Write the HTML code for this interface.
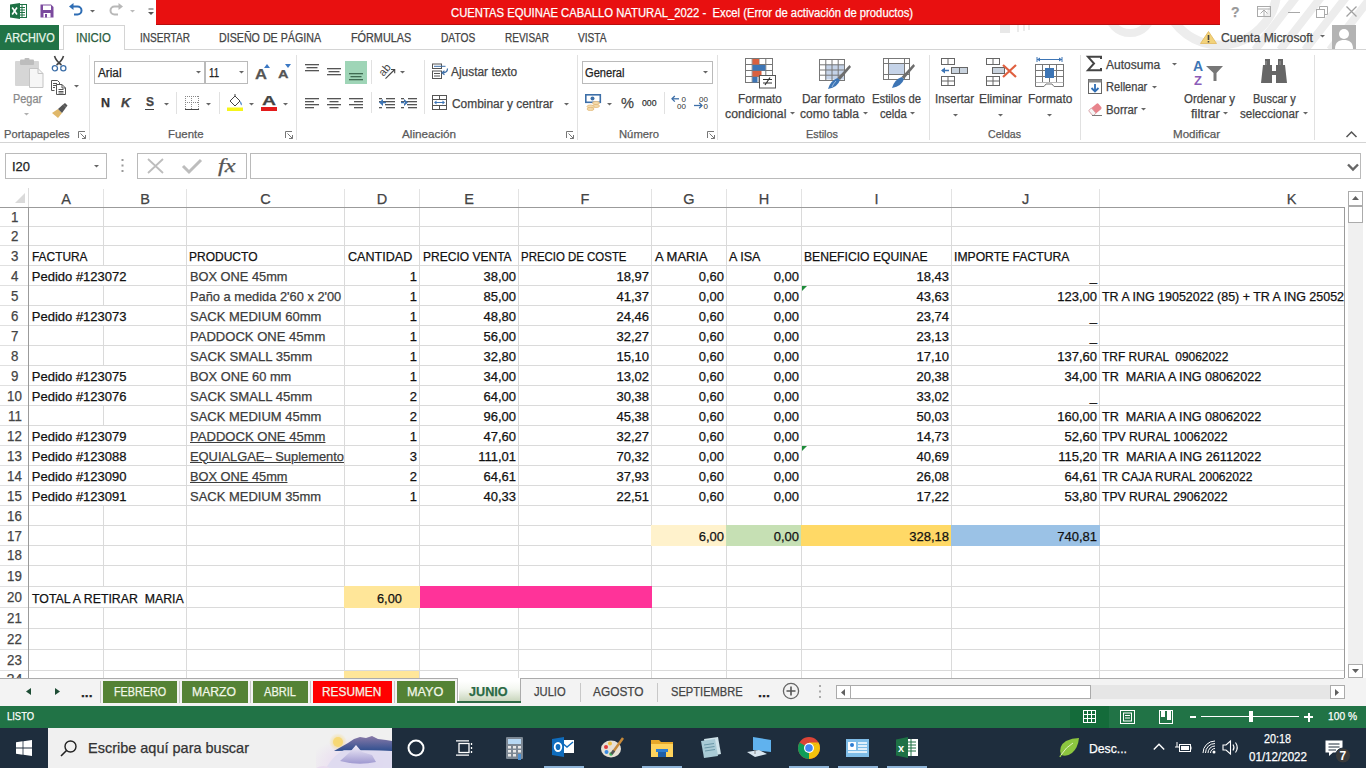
<!DOCTYPE html>
<html><head><meta charset="utf-8"><style>
html,body{margin:0;padding:0;width:1366px;height:768px;overflow:hidden;background:#fff;}
body{position:relative;font-family:"Liberation Sans",sans-serif;}
.t{position:absolute;white-space:pre;-webkit-text-stroke:0.25px currentColor;}
.r{position:absolute;}
.s{position:absolute;overflow:visible;}
</style></head><body>
<svg class="s" style="left:1000px;top:0px;overflow:hidden;" width="366" height="49" viewBox="0 0 366 49"><g transform="translate(-1000,0)" fill="none" stroke="#ededed">
<circle cx="1130" cy="11" r="22" stroke-width="8"/>
<circle cx="1220" cy="-12" r="57" stroke-width="9"/>
<path d="M1255 50L1297 -4M1280 50L1322 -4M1305 50L1347 -4M1330 50L1372 -4" stroke-width="8"/>
<path d="M1003.5 25V33" stroke-width="13" stroke="#e8e8e8"/><path d="M1018 25V32M1024 25V31M1029 25V30" stroke-width="2" stroke="#ebebeb"/><path d="M978 25L987 30" stroke-width="3" stroke="#ededed"/>
</g></svg>
<div class="r" style="left:156px;top:0px;width:1064px;height:25px;background:#e81010;"></div>
<div class="r" style="left:156px;top:24px;width:1064px;height:1px;background:#b80d0d;"></div>
<div class="t" style="left:450.50px;top:6.94px;font-size:12px;line-height:12px;color:#fff;transform:scaleX(0.9397);transform-origin:0 0;">CUENTAS EQUINAE CABALLO NATURAL_2022 -  Excel (Error de activación de productos)</div>
<svg class="s" style="left:10px;top:3px;" width="17" height="16" viewBox="0 0 17 16"><rect x="7" y="1.5" width="9.5" height="13" fill="#fff" stroke="#1e7145" stroke-width="1"/>
<path d="M9 4.5h6M9 7h6M9 9.5h6M9 12h6M12 2V14" stroke="#1e7145" stroke-width="1"/>
<path d="M0 1.5L10 0V16L0 14.5Z" fill="#1e7145"/>
<path d="M2.2 4.5L7 11.5M7 4.5L2.2 11.5" stroke="#fff" stroke-width="1.6"/></svg>
<svg class="s" style="left:40px;top:4px;" width="14" height="14" viewBox="0 0 14 14"><path d="M0.5 0.5H11L13.5 3V13.5H0.5Z" fill="#7b4a9e"/><rect x="3" y="1.5" width="8" height="4.5" fill="#fff"/><rect x="3.5" y="9" width="7" height="4.5" fill="#fff"/><rect x="5" y="10" width="2" height="3.5" fill="#7b4a9e"/></svg>
<svg class="s" style="left:69px;top:3px;" width="14" height="14" viewBox="0 0 14 14"><path d="M3 3.5H8.5A4 4 0 0 1 8.5 11.5H5" fill="none" stroke="#2e6db4" stroke-width="2"/><path d="M0 3.5L4.5 0V7Z" fill="#2e6db4"/></svg>
<svg class="s" style="left:89.5px;top:9.5px;" width="5" height="3" viewBox="0 0 5 3"><path d="M0 0H5L2.5 2.5Z" fill="#666"/></svg>
<svg class="s" style="left:109px;top:3px;" width="14" height="14" viewBox="0 0 14 14"><path d="M11 3.5H5.5A4 4 0 0 0 5.5 11.5H9" fill="none" stroke="#b8b8b8" stroke-width="2"/><path d="M14 3.5L9.5 0V7Z" fill="#b8b8b8"/></svg>
<svg class="s" style="left:130px;top:9.5px;" width="5" height="3" viewBox="0 0 5 3"><path d="M0 0H5L2.5 2.5Z" fill="#bbb"/></svg>
<svg class="s" style="left:147px;top:8px;" width="8" height="8" viewBox="0 0 8 8"><path d="M1.5 1h5" stroke="#555" stroke-width="1"/><path d="M1 4H7L4 7Z" fill="#555"/></svg>
<div class="t" style="left:1231.00px;top:4.65px;font-size:14px;line-height:14px;color:#9a9a9a;font-weight:bold;transform-origin:0 0;">?</div>
<svg class="s" style="left:1257px;top:6px;" width="14" height="11" viewBox="0 0 14 11"><rect x="0.5" y="0.5" width="13" height="10" fill="none" stroke="#aaa"/><path d="M3.5 7.5L7 4L10.5 7.5M7 4V10" stroke="#aaa" fill="none"/><path d="M0.5 3h13" stroke="#aaa"/></svg>
<div class="r" style="left:1288px;top:12px;width:12px;height:1px;background:#a8a8a8;"></div>
<svg class="s" style="left:1316px;top:6px;" width="12" height="12" viewBox="0 0 12 12"><rect x="0.5" y="3.5" width="8" height="8" fill="#fff" stroke="#aaa"/><path d="M3.5 3.5V0.5H11.5V8.5H8.5" fill="none" stroke="#aaa"/></svg>
<svg class="s" style="left:1346px;top:6px;" width="11" height="11" viewBox="0 0 11 11"><path d="M0.5 0.5L10.5 10.5M10.5 0.5L0.5 10.5" stroke="#a0a0a0" stroke-width="1.3"/></svg>
<div class="r" style="left:0px;top:49px;width:63px;height:1px;background:#d4d4d4;"></div>
<div class="r" style="left:0px;top:25px;width:59px;height:25px;background:#217346;"></div>
<div class="t" style="left:4.60px;top:31.54px;font-size:12px;line-height:12px;color:#e8f7ea;transform:scaleX(0.9072);transform-origin:0 0;">ARCHIVO</div>
<div class="r" style="left:63px;top:25px;width:62px;height:25px;background:#fff;border:1px solid #d4d4d4;border-bottom:none;box-sizing:border-box;"></div>
<div class="r" style="left:124px;top:49px;width:1242px;height:1px;background:#d4d4d4;"></div>
<div class="t" style="left:76.00px;top:31.54px;font-size:12px;line-height:12px;color:#2a5c3e;transform:scaleX(0.9491);transform-origin:0 0;">INICIO</div>
<div class="t" style="left:140.00px;top:31.84px;font-size:12px;line-height:12px;color:#444;transform:scaleX(0.8394);transform-origin:0 0;">INSERTAR</div>
<div class="t" style="left:219.40px;top:31.84px;font-size:12px;line-height:12px;color:#444;transform:scaleX(0.8893);transform-origin:0 0;">DISEÑO DE PÁGINA</div>
<div class="t" style="left:351.30px;top:31.84px;font-size:12px;line-height:12px;color:#444;transform:scaleX(0.9029);transform-origin:0 0;">FÓRMULAS</div>
<div class="t" style="left:441.40px;top:31.84px;font-size:12px;line-height:12px;color:#444;transform:scaleX(0.8501);transform-origin:0 0;">DATOS</div>
<div class="t" style="left:505.00px;top:31.84px;font-size:12px;line-height:12px;color:#444;transform:scaleX(0.8352);transform-origin:0 0;">REVISAR</div>
<div class="t" style="left:577.80px;top:31.84px;font-size:12px;line-height:12px;color:#444;transform:scaleX(0.8465);transform-origin:0 0;">VISTA</div>
<svg class="s" style="left:1200px;top:31px;" width="17" height="13" viewBox="0 0 17 13"><path d="M8.5 0.5L16.5 12.5H0.5Z" fill="#f2d27a" stroke="#e2b85a" stroke-width="0.8"/><rect x="7.7" y="4" width="1.6" height="5" fill="#444"/><rect x="7.7" y="10" width="1.6" height="1.5" fill="#444"/></svg>
<div class="t" style="left:1221.00px;top:31.84px;font-size:12px;line-height:12px;color:#444;transform:scaleX(1.0143);transform-origin:0 0;">Cuenta Microsoft</div>
<svg class="s" style="left:1320px;top:35px;" width="5" height="3" viewBox="0 0 5 3"><path d="M0 0H5L2.5 2.5Z" fill="#666"/></svg>
<svg class="s" style="left:1332px;top:25px;" width="24" height="24" viewBox="0 0 24 24"><rect width="24" height="24" fill="#b3b3b3"/><circle cx="12" cy="9" r="5" fill="#fff"/><path d="M3 24C3 17 7 15 12 15S21 17 21 24Z" fill="#fff"/></svg>
<div class="r" style="left:0px;top:142px;width:1366px;height:1px;background:#d4d4d4;"></div>
<div class="r" style="left:89px;top:55px;width:1px;height:85px;background:#e1e1e1;"></div>
<div class="r" style="left:296px;top:55px;width:1px;height:85px;background:#e1e1e1;"></div>
<div class="r" style="left:577px;top:55px;width:1px;height:85px;background:#e1e1e1;"></div>
<div class="r" style="left:717px;top:55px;width:1px;height:85px;background:#e1e1e1;"></div>
<div class="r" style="left:929px;top:55px;width:1px;height:85px;background:#e1e1e1;"></div>
<div class="r" style="left:1080px;top:55px;width:1px;height:85px;background:#e1e1e1;"></div>
<div class="r" style="left:1314px;top:55px;width:1px;height:85px;background:#e1e1e1;"></div>
<div class="t" style="left:3.80px;top:129.19px;font-size:11px;line-height:11px;color:#5a5a5a;transform:scaleX(1.0135);transform-origin:0 0;">Portapapeles</div>
<div class="t" style="left:167.50px;top:129.19px;font-size:11px;line-height:11px;color:#5a5a5a;transform:scaleX(1.0366);transform-origin:0 0;">Fuente</div>
<div class="t" style="left:402.00px;top:129.19px;font-size:11px;line-height:11px;color:#5a5a5a;transform:scaleX(1.0639);transform-origin:0 0;">Alineación</div>
<div class="t" style="left:619.00px;top:129.19px;font-size:11px;line-height:11px;color:#5a5a5a;transform:scaleX(1.0224);transform-origin:0 0;">Número</div>
<div class="t" style="left:806.00px;top:129.19px;font-size:11px;line-height:11px;color:#5a5a5a;transform:scaleX(0.9877);transform-origin:0 0;">Estilos</div>
<div class="t" style="left:988.00px;top:129.19px;font-size:11px;line-height:11px;color:#5a5a5a;transform:scaleX(0.9637);transform-origin:0 0;">Celdas</div>
<div class="t" style="left:1173.00px;top:129.19px;font-size:11px;line-height:11px;color:#5a5a5a;transform:scaleX(1.0532);transform-origin:0 0;">Modificar</div>
<svg class="s" style="left:78px;top:131px;" width="8" height="8" viewBox="0 0 8 8"><path d="M0.5 7V0.5H7" fill="none" stroke="#777"/><path d="M2.5 2.5L7.5 7.5M7.5 4V7.5H4" fill="none" stroke="#777"/></svg>
<svg class="s" style="left:285px;top:131px;" width="8" height="8" viewBox="0 0 8 8"><path d="M0.5 7V0.5H7" fill="none" stroke="#777"/><path d="M2.5 2.5L7.5 7.5M7.5 4V7.5H4" fill="none" stroke="#777"/></svg>
<svg class="s" style="left:566px;top:131px;" width="8" height="8" viewBox="0 0 8 8"><path d="M0.5 7V0.5H7" fill="none" stroke="#777"/><path d="M2.5 2.5L7.5 7.5M7.5 4V7.5H4" fill="none" stroke="#777"/></svg>
<svg class="s" style="left:707px;top:131px;" width="8" height="8" viewBox="0 0 8 8"><path d="M0.5 7V0.5H7" fill="none" stroke="#777"/><path d="M2.5 2.5L7.5 7.5M7.5 4V7.5H4" fill="none" stroke="#777"/></svg>
<svg class="s" style="left:1346px;top:131px;" width="11" height="7" viewBox="0 0 11 7"><path d="M0.5 6L5.5 1L10.5 6" fill="none" stroke="#555" stroke-width="1.5"/></svg>
<svg class="s" style="left:15px;top:58px;" width="29" height="31" viewBox="0 0 29 31"><rect x="0" y="3" width="24" height="25" rx="1" fill="#d6d6d6"/><rect x="5" y="1.5" width="14" height="5.5" rx="1" fill="#bdbdbd"/><rect x="9.5" y="0" width="5" height="3.5" rx="1" fill="#bdbdbd"/>
<path d="M14.5 10.5H23L28 15.5V29.5H14.5Z" fill="#f6f6f6" stroke="#c4c4c4"/><path d="M23 10.5V15.5H28" fill="none" stroke="#c4c4c4"/></svg>
<div class="t" style="left:12.80px;top:92.64px;font-size:12px;line-height:12px;color:#8a8a8a;transform:scaleX(0.9087);transform-origin:0 0;">Pegar</div>
<svg class="s" style="left:24px;top:112.5px;" width="5" height="3" viewBox="0 0 5 3"><path d="M0 0H5L2.5 2.5Z" fill="#b0b0b0"/></svg>
<svg class="s" style="left:52px;top:56px;" width="15" height="16" viewBox="0 0 15 16"><path d="M2.5 0Q4 5 9.5 9M11.5 0Q10 5 4.5 9" fill="none" stroke="#444" stroke-width="1.6"/><circle cx="2.9" cy="12.3" r="2.6" fill="none" stroke="#3d6fa8" stroke-width="1.3"/><circle cx="11.3" cy="12.3" r="2.6" fill="none" stroke="#3d6fa8" stroke-width="1.3"/></svg>
<svg class="s" style="left:51px;top:80px;" width="15" height="15" viewBox="0 0 15 15"><path d="M0.5 0.5H6.5L8.5 2.5V4.5M3.5 10.5H0.5V0.5" fill="#fff" stroke="#555"/><path d="M2 3.5H6M2 5.5H5M2 7.5H4" stroke="#555"/><path d="M5.5 4.5H11L14.5 8V14.5H5.5Z" fill="#fff" stroke="#555"/><path d="M11 4.5V8H14.5" fill="none" stroke="#555"/><path d="M7.5 9.5H12.5M7.5 11.5H12.5M7.5 13H12.5" stroke="#555"/></svg>
<svg class="s" style="left:73.5px;top:85px;" width="5" height="3" viewBox="0 0 5 3"><path d="M0 0H5L2.5 2.5Z" fill="#666"/></svg>
<svg class="s" style="left:52px;top:103px;" width="16" height="15" viewBox="0 0 16 15"><path d="M0 10L6 6L10 10L6 15Z" fill="#e0b86a"/><path d="M6 6L11 1.5L14 4.5L10 10Z" fill="#555"/><path d="M11 1.5L13 0L15.5 2.5L14 4.5Z" fill="#555"/></svg>
<div class="r" style="left:94px;top:61px;width:111px;height:23px;background:#fff;border:1px solid #bababa;box-sizing:border-box;"></div>
<div class="r" style="left:205px;top:61px;width:43px;height:23px;background:#fff;border:1px solid #bababa;box-sizing:border-box;"></div>
<div class="t" style="left:97.50px;top:66.84px;font-size:12px;line-height:12px;color:#222;transform:scaleX(0.9789);transform-origin:0 0;">Arial</div>
<div class="t" style="left:209.00px;top:66.84px;font-size:12px;line-height:12px;color:#222;transform:scaleX(0.8027);transform-origin:0 0;">11</div>
<svg class="s" style="left:195.5px;top:70.5px;" width="5" height="3" viewBox="0 0 5 3"><path d="M0 0H5L2.5 2.5Z" fill="#666"/></svg>
<svg class="s" style="left:239px;top:70.5px;" width="5" height="3" viewBox="0 0 5 3"><path d="M0 0H5L2.5 2.5Z" fill="#666"/></svg>
<div class="t" style="left:255.00px;top:67.15px;font-size:14px;line-height:14px;color:#555;font-weight:bold;transform:scaleX(1.1869);transform-origin:0 0;">A</div>
<svg class="s" style="left:263.5px;top:64px;" width="6" height="4" viewBox="0 0 6 4"><path d="M0 4L3 0L6 4Z" fill="#3b78c4"/></svg>
<div class="t" style="left:277.50px;top:69.27px;font-size:11.5px;line-height:11.5px;color:#555;font-weight:bold;transform:scaleX(1.2643);transform-origin:0 0;">A</div>
<svg class="s" style="left:284.5px;top:64px;" width="6" height="4" viewBox="0 0 6 4"><path d="M0 0L3 4L6 0Z" fill="#3b78c4"/></svg>
<div class="t" style="left:100.50px;top:96.84px;font-size:12px;line-height:12px;color:#333;font-weight:bold;transform:scaleX(1.0385);transform-origin:0 0;">N</div>
<div class="t" style="left:121.00px;top:96.84px;font-size:12px;line-height:12px;color:#444;font-weight:bold;transform:scaleX(1.0962);transform-origin:0 0;font-style:italic;">K</div>
<div class="t" style="left:145.50px;top:95.84px;font-size:12px;line-height:12px;color:#444;font-weight:bold;transform:scaleX(0.9995);transform-origin:0 0;">S</div>
<div class="r" style="left:145px;top:108.5px;width:9px;height:1px;background:#444;"></div>
<svg class="s" style="left:163.6px;top:102.5px;" width="5" height="3" viewBox="0 0 5 3"><path d="M0 0H5L2.5 2.5Z" fill="#666"/></svg>
<div class="r" style="left:176px;top:92px;width:1px;height:22px;background:#e1e1e1;"></div>
<svg class="s" style="left:185px;top:96px;" width="14" height="14" viewBox="0 0 14 14"><g fill="#999"><rect x="0" y="0" width="14" height="1" fill="none"/></g><path d="M0.5 0V13M6.5 0V13M13.5 0V13M0 0.5H14M0 6.5H14" stroke="#888" stroke-dasharray="1 1" fill="none"/><path d="M0 13.5H14" stroke="#444"/></svg>
<svg class="s" style="left:206px;top:102.5px;" width="5" height="3" viewBox="0 0 5 3"><path d="M0 0H5L2.5 2.5Z" fill="#666"/></svg>
<div class="r" style="left:219px;top:92px;width:1px;height:22px;background:#e1e1e1;"></div>
<svg class="s" style="left:227px;top:94px;" width="17" height="18" viewBox="0 0 17 18"><path d="M3 7L8 2L13 7L8 12Z" fill="#fff" stroke="#444"/><path d="M8 2V0" stroke="#444"/><path d="M13 7Q15.5 9 14.5 11.5Q13 10 13 7Z" fill="#3b78c4"/><rect x="0" y="13.5" width="16" height="3.5" fill="#f5f51a"/></svg>
<svg class="s" style="left:249px;top:102.5px;" width="5" height="3" viewBox="0 0 5 3"><path d="M0 0H5L2.5 2.5Z" fill="#666"/></svg>
<div class="t" style="left:262.00px;top:93.50px;font-size:13px;line-height:13px;color:#444;font-weight:bold;transform:scaleX(1.4912);transform-origin:0 0;">A</div>
<div class="r" style="left:261px;top:107px;width:16px;height:4px;background:#e31b1b;"></div>
<svg class="s" style="left:283px;top:102.5px;" width="5" height="3" viewBox="0 0 5 3"><path d="M0 0H5L2.5 2.5Z" fill="#666"/></svg>
<svg class="s" style="left:305px;top:63px;" width="14" height="9" viewBox="0 0 14 9"><rect x="0" y="1" width="14" height="1.3" fill="#555"/><rect x="1.5" y="4" width="11" height="1.3" fill="#555"/><rect x="0" y="7" width="14" height="1.3" fill="#555"/></svg>
<svg class="s" style="left:327px;top:67px;" width="14" height="9" viewBox="0 0 14 9"><rect x="0" y="1" width="14" height="1.3" fill="#555"/><rect x="1.5" y="4" width="11" height="1.3" fill="#555"/><rect x="0" y="7" width="14" height="1.3" fill="#555"/></svg>
<div class="r" style="left:345px;top:61px;width:22px;height:23px;background:#9fd5b7;"></div>
<svg class="s" style="left:349px;top:72px;" width="14" height="9" viewBox="0 0 14 9"><rect x="0" y="1" width="14" height="1.3" fill="#3f6b52"/><rect x="1.5" y="4" width="11" height="1.3" fill="#3f6b52"/><rect x="0" y="7" width="14" height="1.3" fill="#3f6b52"/></svg>
<svg class="s" style="left:377px;top:62px;" width="20" height="20" viewBox="0 0 20 20"><text x="1" y="13" font-size="11" font-family="Liberation Sans" fill="#444" transform="rotate(-50 6 8)">ab</text><path d="M8.5 16.7L17.7 7.5" stroke="#444" stroke-width="1.1"/><path d="M14 7.5H17.7V11.2" fill="none" stroke="#444" stroke-width="1.1"/></svg>
<svg class="s" style="left:399.7px;top:70.5px;" width="5" height="3" viewBox="0 0 5 3"><path d="M0 0H5L2.5 2.5Z" fill="#666"/></svg>
<svg class="s" style="left:305px;top:97px;" width="14" height="12" viewBox="0 0 14 12"><rect x="0" y="1" width="14" height="1.3" fill="#555"/><rect x="0" y="4" width="9" height="1.3" fill="#555"/><rect x="0" y="7" width="14" height="1.3" fill="#555"/><rect x="0" y="10" width="9" height="1.3" fill="#555"/></svg>
<svg class="s" style="left:327px;top:97px;" width="14" height="12" viewBox="0 0 14 12"><rect x="0" y="1" width="14" height="1.3" fill="#555"/><rect x="2.5" y="4" width="9" height="1.3" fill="#555"/><rect x="0" y="7" width="14" height="1.3" fill="#555"/><rect x="2.5" y="10" width="9" height="1.3" fill="#555"/></svg>
<svg class="s" style="left:349px;top:97px;" width="14" height="12" viewBox="0 0 14 12"><rect x="0" y="1" width="14" height="1.3" fill="#555"/><rect x="5" y="4" width="9" height="1.3" fill="#555"/><rect x="0" y="7" width="14" height="1.3" fill="#555"/><rect x="5" y="10" width="9" height="1.3" fill="#555"/></svg>
<svg class="s" style="left:379px;top:97px;" width="16" height="12" viewBox="0 0 16 12"><rect x="0" y="1" width="3" height="1.3" fill="#555"/><rect x="0" y="4" width="16" height="1.3" fill="#555"/><rect x="6" y="7" width="10" height="1.3" fill="#555"/><rect x="0" y="10" width="3" height="1.3" fill="#555"/><rect x="7" y="1" width="9" height="1.3" fill="#555"/><rect x="7" y="10" width="9" height="1.3" fill="#555"/><path d="M0 5.5L4 2V9Z M3 4.8H7V6.2H3Z" fill="#3d75b5"/></svg>
<svg class="s" style="left:401px;top:97px;" width="16" height="12" viewBox="0 0 16 12"><rect x="0" y="1" width="3" height="1.3" fill="#555"/><rect x="0" y="4" width="16" height="1.3" fill="#555"/><rect x="6" y="7" width="10" height="1.3" fill="#555"/><rect x="0" y="10" width="3" height="1.3" fill="#555"/><rect x="7" y="1" width="9" height="1.3" fill="#555"/><rect x="7" y="10" width="9" height="1.3" fill="#555"/><path d="M7 5.5L3 2V9Z M0 4.8H4V6.2H0Z" fill="#3d75b5"/></svg>
<div class="r" style="left:424px;top:60px;width:1px;height:54px;background:#e1e1e1;"></div>
<div class="r" style="left:371px;top:60px;width:1px;height:24px;background:#e1e1e1;"></div>
<div class="r" style="left:371px;top:92px;width:1px;height:21px;background:#e1e1e1;"></div>
<svg class="s" style="left:432px;top:63px;" width="17" height="16" viewBox="0 0 17 16"><rect x="0.5" y="1" width="9" height="4.5" fill="#fff" stroke="#555"/><path d="M2 3.3H13.5" stroke="#3d6fa8"/><rect x="0.5" y="8" width="9" height="7.5" fill="#fff" stroke="#555"/><path d="M2 10.5H8M2 13H8" stroke="#555"/><path d="M15.5 5.5Q15.5 9.5 11 9.8" fill="none" stroke="#3d6fa8" stroke-width="1.2"/><path d="M12.5 7.8L10 9.8L12.5 11.8" fill="none" stroke="#3d6fa8" stroke-width="1.2"/></svg>
<div class="t" style="left:451.30px;top:66.44px;font-size:12px;line-height:12px;color:#444;transform:scaleX(0.9925);transform-origin:0 0;">Ajustar texto</div>
<svg class="s" style="left:432px;top:95px;" width="15" height="15" viewBox="0 0 15 15"><rect x="0.5" y="0.5" width="14" height="14" fill="none" stroke="#555"/><path d="M0.5 4.5H14.5M0.5 10.5H14.5M7.5 0.5V4.5M7.5 10.5V14.5" stroke="#555"/><path d="M3 7.5H12" stroke="#3d75b5"/><path d="M2 7.5L4.5 5.5V9.5Z M13 7.5L10.5 5.5V9.5Z" fill="#3d75b5"/></svg>
<div class="t" style="left:451.70px;top:97.64px;font-size:12px;line-height:12px;color:#444;transform:scaleX(0.9928);transform-origin:0 0;">Combinar y centrar</div>
<svg class="s" style="left:563.7px;top:102.5px;" width="5" height="3" viewBox="0 0 5 3"><path d="M0 0H5L2.5 2.5Z" fill="#666"/></svg>
<div class="r" style="left:582px;top:61px;width:131px;height:23px;background:#fff;border:1px solid #bababa;box-sizing:border-box;"></div>
<div class="t" style="left:585.00px;top:66.84px;font-size:12px;line-height:12px;color:#222;transform:scaleX(0.9252);transform-origin:0 0;">General</div>
<svg class="s" style="left:703px;top:70.5px;" width="5" height="3" viewBox="0 0 5 3"><path d="M0 0H5L2.5 2.5Z" fill="#666"/></svg>
<svg class="s" style="left:585px;top:94px;" width="18" height="17" viewBox="0 0 18 17"><rect x="0.8" y="0.8" width="14.5" height="7.5" fill="#fff" stroke="#3d6fa8" stroke-width="1.6"/><circle cx="7.5" cy="4.5" r="2" fill="#3d6fa8"/><g fill="#f3dcae" stroke="#e3b978" stroke-width="0.8"><ellipse cx="11" cy="9" rx="3.5" ry="1.5"/><ellipse cx="11" cy="12" rx="3.5" ry="1.5"/><ellipse cx="5.5" cy="12.5" rx="3.5" ry="1.5"/><ellipse cx="5.5" cy="15" rx="3.5" ry="1.5"/></g></svg>
<svg class="s" style="left:607px;top:102.5px;" width="5" height="3" viewBox="0 0 5 3"><path d="M0 0H5L2.5 2.5Z" fill="#666"/></svg>
<div class="t" style="left:621.00px;top:95.30px;font-size:15px;line-height:15px;color:#444;transform:scaleX(0.9747);transform-origin:0 0;">%</div>
<div class="t" style="left:641.50px;top:97.96px;font-size:9.5px;line-height:9.5px;color:#333;transform:scaleX(0.9148);transform-origin:0 0;">000</div>
<div class="r" style="left:664px;top:92px;width:1px;height:22px;background:#e1e1e1;"></div>
<svg class="s" style="left:671px;top:95px;" width="17" height="14" viewBox="0 0 17 14"><text x="10.5" y="6.8" font-size="8" font-family="Liberation Sans" fill="#333">0</text><text x="6" y="13.8" font-size="8" font-family="Liberation Sans" fill="#333">00</text><path d="M1 3.8H8" stroke="#3d6fa8" stroke-width="1.3"/><path d="M3.8 1L1 3.8L3.8 6.6" fill="none" stroke="#3d6fa8" stroke-width="1.3"/></svg>
<svg class="s" style="left:693px;top:95px;" width="17" height="14" viewBox="0 0 17 14"><text x="6" y="6.8" font-size="8" font-family="Liberation Sans" fill="#333">00</text><text x="10.5" y="13.8" font-size="8" font-family="Liberation Sans" fill="#333">0</text><path d="M1 10.5H9" stroke="#3d6fa8" stroke-width="1.3"/><path d="M6.2 7.7L9 10.5L6.2 13.3" fill="none" stroke="#3d6fa8" stroke-width="1.3"/></svg>
<svg class="s" style="left:745px;top:58px;" width="32" height="31" viewBox="0 0 32 31"><rect x="0.5" y="0.5" width="27" height="24" fill="#fff" stroke="#777"/><path d="M7.2 0.5V24.5" stroke="#777"/><path d="M14.0 0.5V24.5" stroke="#777"/><path d="M20.8 0.5V24.5" stroke="#777"/><path d="M0.5 6.5H27.5" stroke="#777"/><path d="M0.5 12.5H27.5" stroke="#777"/><path d="M0.5 18.5H27.5" stroke="#777"/><rect x="7.5" y="1" width="6.5" height="5.5" fill="#d9603f"/><rect x="7.5" y="7" width="13" height="5.5" fill="#3d75b5"/><rect x="7.5" y="13" width="9" height="5.5" fill="#d9603f"/><rect x="7.5" y="19" width="5" height="5.5" fill="#3d75b5"/><rect x="14.5" y="17.5" width="16" height="12.5" fill="#fff" stroke="#555"/><path d="M18 21.5H27M18 25H27M25 19.5L20 27" stroke="#333" stroke-width="1.2"/></svg>
<svg class="s" style="left:789.5px;top:112px;" width="5" height="3" viewBox="0 0 5 3"><path d="M0 0H5L2.5 2.5Z" fill="#666"/></svg>
<div class="t" style="left:737.70px;top:92.54px;font-size:12px;line-height:12px;color:#444;transform:scaleX(0.9803);transform-origin:0 0;">Formato</div>
<div class="t" style="left:724.60px;top:108.34px;font-size:12px;line-height:12px;color:#444;transform:scaleX(1.0226);transform-origin:0 0;">condicional</div>
<svg class="s" style="left:819px;top:59px;" width="32" height="31" viewBox="0 0 32 31"><rect x="6" y="5.5" width="19" height="15" fill="#c5d3e8"/><rect x="0.5" y="0.5" width="25" height="21" fill="none" stroke="#777"/><path d="M6.8 0.5V21.5" stroke="#777"/><path d="M13.0 0.5V21.5" stroke="#777"/><path d="M19.2 0.5V21.5" stroke="#777"/><path d="M0.5 5.8H25.5" stroke="#777"/><path d="M0.5 11.0H25.5" stroke="#777"/><path d="M0.5 16.2H25.5" stroke="#777"/><path d="M30.5 6L32 8L21 21L18.5 19Z" fill="#6d6d6d"/><path d="M18.5 19L21 21Q19 28 9 30Q11 22 18.5 19Z" fill="#3d75b5"/><path d="M17 22Q14 25 13 28" stroke="#9bbbe0" stroke-width="1" fill="none"/></svg>
<div class="t" style="left:801.50px;top:92.54px;font-size:12px;line-height:12px;color:#444;transform:scaleX(0.9944);transform-origin:0 0;">Dar formato</div>
<div class="t" style="left:800.00px;top:108.34px;font-size:12px;line-height:12px;color:#444;transform:scaleX(1.0051);transform-origin:0 0;">como tabla</div>
<svg class="s" style="left:862.5px;top:112px;" width="5" height="3" viewBox="0 0 5 3"><path d="M0 0H5L2.5 2.5Z" fill="#666"/></svg>
<svg class="s" style="left:883px;top:58px;" width="32" height="31" viewBox="0 0 32 31"><rect x="0.5" y="0.5" width="26" height="21" fill="#fff" stroke="#777"/><rect x="6" y="6" width="15" height="10" fill="#c5d3e8"/><path d="M0.5 5.5H26.5M0.5 16.5H26.5M5.5 0.5V21.5M21.5 0.5V21.5" stroke="#777"/><path d="M30.5 6L32 8L21 21L18.5 19Z" fill="#6d6d6d"/><path d="M18.5 19L21 21Q19 28 9 30Q11 22 18.5 19Z" fill="#3d75b5"/></svg>
<div class="t" style="left:872.00px;top:92.54px;font-size:12px;line-height:12px;color:#444;transform:scaleX(0.9418);transform-origin:0 0;">Estilos de</div>
<div class="t" style="left:880.00px;top:108.34px;font-size:12px;line-height:12px;color:#444;transform:scaleX(0.9342);transform-origin:0 0;">celda</div>
<svg class="s" style="left:910px;top:112px;" width="5" height="3" viewBox="0 0 5 3"><path d="M0 0H5L2.5 2.5Z" fill="#666"/></svg>
<svg class="s" style="left:941px;top:58px;" width="28" height="28" viewBox="0 0 28 28"><rect x="0.5" y="0.5" width="13" height="6" fill="#fff" stroke="#666"/><path d="M7 0.5V6.5" stroke="#666"/><rect x="10.5" y="9.5" width="16" height="6" fill="#c9d3de" stroke="#666"/><path d="M18.5 9.5V15.5" stroke="#666"/><path d="M1 12.5H8" stroke="#3d75b5" stroke-width="1.5"/><path d="M0 12.5L4 9.5V15.5Z" fill="#3d75b5"/><rect x="0.5" y="18.5" width="13" height="9" fill="#fff" stroke="#666"/><path d="M7 18.5V27.5M0.5 23H13.5" stroke="#666"/></svg>
<div class="t" style="left:935.00px;top:92.54px;font-size:12px;line-height:12px;color:#444;transform:scaleX(0.9586);transform-origin:0 0;">Insertar</div>
<svg class="s" style="left:952.7px;top:113.5px;" width="5" height="3" viewBox="0 0 5 3"><path d="M0 0H5L2.5 2.5Z" fill="#666"/></svg>
<svg class="s" style="left:986px;top:58px;" width="32" height="28" viewBox="0 0 32 28"><rect x="0.5" y="0.5" width="13" height="6" fill="#fff" stroke="#666"/><path d="M7 0.5V6.5" stroke="#666"/><rect x="6.5" y="9.5" width="12" height="6" fill="#c9d3de" stroke="#666"/><rect x="0.5" y="18.5" width="13" height="9" fill="#fff" stroke="#666"/><path d="M7 18.5V27.5M0.5 23H13.5" stroke="#666"/><path d="M17 7L30 19M30 7L17 19" stroke="#e06040" stroke-width="2.2"/></svg>
<div class="t" style="left:979.00px;top:92.54px;font-size:12px;line-height:12px;color:#444;transform:scaleX(0.9921);transform-origin:0 0;">Eliminar</div>
<svg class="s" style="left:998px;top:113.5px;" width="5" height="3" viewBox="0 0 5 3"><path d="M0 0H5L2.5 2.5Z" fill="#666"/></svg>
<svg class="s" style="left:1035px;top:57px;" width="30" height="30" viewBox="0 0 30 30"><path d="M2 2.5H27M2 0V5M27 0V5" stroke="#3d75b5"/><path d="M2 2.5L5 0.5V4.5Z M27 2.5L24 0.5V4.5Z" fill="#3d75b5"/><rect x="0.5" y="7.5" width="28" height="18" fill="#fff" stroke="#777"/><path d="M7.5 7.5V25.5M14.5 7.5V25.5M21.5 7.5V25.5M0.5 13.5H28.5M0.5 19.5H28.5" stroke="#777"/><rect x="10" y="11" width="9" height="10" fill="#3d75b5"/><path d="M0.5 25.5V29.5H9L11 27H17L19 29.5H28.5V25.5" fill="#fff" stroke="#777"/></svg>
<div class="t" style="left:1027.60px;top:92.54px;font-size:12px;line-height:12px;color:#444;transform:scaleX(0.9937);transform-origin:0 0;">Formato</div>
<svg class="s" style="left:1047px;top:113.5px;" width="5" height="3" viewBox="0 0 5 3"><path d="M0 0H5L2.5 2.5Z" fill="#666"/></svg>
<svg class="s" style="left:1087px;top:56px;" width="15" height="15" viewBox="0 0 15 15"><path d="M14 3V0.8H1L7 7.5L1 14.2H14V12" fill="none" stroke="#444" stroke-width="2"/></svg>
<div class="t" style="left:1106.40px;top:58.54px;font-size:12px;line-height:12px;color:#444;transform:scaleX(1.0013);transform-origin:0 0;">Autosuma</div>
<svg class="s" style="left:1172px;top:62.5px;" width="5" height="3" viewBox="0 0 5 3"><path d="M0 0H5L2.5 2.5Z" fill="#666"/></svg>
<svg class="s" style="left:1088px;top:79px;" width="14" height="15" viewBox="0 0 14 15"><rect x="0.5" y="0.5" width="13" height="14" fill="#fff" stroke="#666"/><rect x="0.5" y="0.5" width="13" height="3" fill="#888"/><path d="M7 5V12" stroke="#2e6db4" stroke-width="1.8"/><path d="M3.5 9L7 12.5L10.5 9" fill="none" stroke="#2e6db4" stroke-width="1.8"/></svg>
<div class="t" style="left:1106.40px;top:81.34px;font-size:12px;line-height:12px;color:#444;transform:scaleX(0.9241);transform-origin:0 0;">Rellenar</div>
<svg class="s" style="left:1151.5px;top:86px;" width="5" height="3" viewBox="0 0 5 3"><path d="M0 0H5L2.5 2.5Z" fill="#666"/></svg>
<svg class="s" style="left:1088px;top:103px;" width="15" height="13" viewBox="0 0 15 13"><g transform="rotate(-40 7 6)"><rect x="1" y="3" width="12" height="7" rx="1.5" fill="#e8848c"/><rect x="1" y="3" width="4" height="7" rx="1" fill="#f6f6f6" stroke="#d8a0a6" stroke-width="0.8"/></g><path d="M4 12.5H14" stroke="#7a7a7a" stroke-width="1"/></svg>
<div class="t" style="left:1106.40px;top:104.24px;font-size:12px;line-height:12px;color:#444;transform:scaleX(0.9477);transform-origin:0 0;">Borrar</div>
<svg class="s" style="left:1141px;top:108px;" width="5" height="3" viewBox="0 0 5 3"><path d="M0 0H5L2.5 2.5Z" fill="#666"/></svg>
<svg class="s" style="left:1193px;top:58px;" width="32" height="28" viewBox="0 0 32 28"><text x="0" y="12.5" font-size="14" font-family="Liberation Sans" font-weight="bold" fill="#3d75b5">A</text><text x="1" y="27" font-size="13" font-family="Liberation Sans" font-weight="bold" fill="#8b5cb8">Z</text><path d="M13 8H30L23.5 15V23H20.5V15Z" fill="#777"/></svg>
<div class="t" style="left:1183.70px;top:92.84px;font-size:12px;line-height:12px;color:#444;transform:scaleX(0.9558);transform-origin:0 0;">Ordenar y</div>
<div class="t" style="left:1191.00px;top:108.24px;font-size:12px;line-height:12px;color:#444;transform:scaleX(1.0762);transform-origin:0 0;">filtrar</div>
<svg class="s" style="left:1222.5px;top:112px;" width="5" height="3" viewBox="0 0 5 3"><path d="M0 0H5L2.5 2.5Z" fill="#666"/></svg>
<svg class="s" style="left:1260px;top:59px;" width="28" height="25" viewBox="0 0 28 25"><path d="M5 0H10V6H12V12H16V6H18V0H23V6H25L27 24H16V16H12V24H1L3 6H5Z" fill="#666"/><path d="M6 2V6M20 2V6" stroke="#999"/></svg>
<div class="t" style="left:1253.00px;top:92.84px;font-size:12px;line-height:12px;color:#444;transform:scaleX(0.9168);transform-origin:0 0;">Buscar y</div>
<div class="t" style="left:1240.00px;top:108.24px;font-size:12px;line-height:12px;color:#444;transform:scaleX(0.9687);transform-origin:0 0;">seleccionar</div>
<svg class="s" style="left:1302.6px;top:112px;" width="5" height="3" viewBox="0 0 5 3"><path d="M0 0H5L2.5 2.5Z" fill="#666"/></svg>
<div class="r" style="left:5px;top:153px;width:102px;height:26px;background:#fff;border:1px solid #bababa;box-sizing:border-box;"></div>
<div class="t" style="left:12.00px;top:160.84px;font-size:12px;line-height:12px;color:#222;transform:scaleX(1.0790);transform-origin:0 0;">I20</div>
<svg class="s" style="left:94px;top:164.5px;" width="5" height="3" viewBox="0 0 5 3"><path d="M0 0H5L2.5 2.5Z" fill="#666"/></svg>
<svg class="s" style="left:121px;top:159px;" width="3" height="14" viewBox="0 0 3 14"><rect x="0.5" y="0" width="2" height="2" fill="#999"/><rect x="0.5" y="5.5" width="2" height="2" fill="#999"/><rect x="0.5" y="11" width="2" height="2" fill="#999"/></svg>
<div class="r" style="left:137px;top:153px;width:110px;height:26px;background:#fff;border:1px solid #bababa;box-sizing:border-box;"></div>
<svg class="s" style="left:147px;top:158px;" width="17" height="16" viewBox="0 0 17 16"><path d="M1 1L16 15M16 1L1 15" stroke="#bdbdbd" stroke-width="1.8"/></svg>
<svg class="s" style="left:182px;top:158px;" width="20" height="16" viewBox="0 0 20 16"><path d="M1 8L7 14L19 2" fill="none" stroke="#bdbdbd" stroke-width="3"/></svg>
<div class="t" style="left:218.00px;top:156.42px;font-size:19px;line-height:19px;color:#555;transform:scaleX(1.2857);transform-origin:0 0;font-family:'Liberation Serif',serif;font-style:italic;">fx</div>
<div class="r" style="left:250px;top:153px;width:1111px;height:26px;background:#fff;border:1px solid #bababa;box-sizing:border-box;"></div>
<svg class="s" style="left:1347px;top:163px;" width="12" height="9" viewBox="0 0 12 9"><path d="M1 1.5L6 6.5L11 1.5" fill="none" stroke="#666" stroke-width="2.4"/></svg>
<div class="r" style="left:0px;top:187px;width:1344px;height:20px;background:#fff;"></div>
<svg class="s" style="left:15px;top:193px;" width="10" height="10" viewBox="0 0 10 10"><path d="M10 0V10H0Z" fill="#dadada"/></svg>
<div class="r" style="left:103px;top:189px;width:1px;height:18px;background:#e3e3e3;"></div>
<div class="r" style="left:186px;top:189px;width:1px;height:18px;background:#e3e3e3;"></div>
<div class="r" style="left:344px;top:189px;width:1px;height:18px;background:#e3e3e3;"></div>
<div class="r" style="left:419px;top:189px;width:1px;height:18px;background:#e3e3e3;"></div>
<div class="r" style="left:518px;top:189px;width:1px;height:18px;background:#e3e3e3;"></div>
<div class="r" style="left:651px;top:189px;width:1px;height:18px;background:#e3e3e3;"></div>
<div class="r" style="left:726px;top:189px;width:1px;height:18px;background:#e3e3e3;"></div>
<div class="r" style="left:801px;top:189px;width:1px;height:18px;background:#e3e3e3;"></div>
<div class="r" style="left:951px;top:189px;width:1px;height:18px;background:#e3e3e3;"></div>
<div class="r" style="left:1099px;top:189px;width:1px;height:18px;background:#e3e3e3;"></div>
<div class="r" style="left:28px;top:189px;width:1px;height:18px;background:#e3e3e3;"></div>
<div class="t" style="left:61.16px;top:191.73px;font-size:14.5px;line-height:14.5px;color:#444;transform-origin:0 0;">A</div>
<div class="t" style="left:140.16px;top:191.73px;font-size:14.5px;line-height:14.5px;color:#444;transform-origin:0 0;">B</div>
<div class="t" style="left:260.26px;top:191.73px;font-size:14.5px;line-height:14.5px;color:#444;transform-origin:0 0;">C</div>
<div class="t" style="left:376.76px;top:191.73px;font-size:14.5px;line-height:14.5px;color:#444;transform-origin:0 0;">D</div>
<div class="t" style="left:464.16px;top:191.73px;font-size:14.5px;line-height:14.5px;color:#444;transform-origin:0 0;">E</div>
<div class="t" style="left:580.57px;top:191.73px;font-size:14.5px;line-height:14.5px;color:#444;transform-origin:0 0;">F</div>
<div class="t" style="left:683.36px;top:191.73px;font-size:14.5px;line-height:14.5px;color:#444;transform-origin:0 0;">G</div>
<div class="t" style="left:758.76px;top:191.73px;font-size:14.5px;line-height:14.5px;color:#444;transform-origin:0 0;">H</div>
<div class="t" style="left:874.49px;top:191.73px;font-size:14.5px;line-height:14.5px;color:#444;transform-origin:0 0;">I</div>
<div class="t" style="left:1021.88px;top:191.73px;font-size:14.5px;line-height:14.5px;color:#444;transform-origin:0 0;">J</div>
<div class="t" style="left:1286.66px;top:191.73px;font-size:14.5px;line-height:14.5px;color:#444;transform-origin:0 0;">K</div>
<div class="r" style="left:29px;top:226px;width:1315px;height:1px;background:#dadada;"></div>
<div class="r" style="left:29px;top:245px;width:1315px;height:1px;background:#dadada;"></div>
<div class="r" style="left:29px;top:265px;width:1315px;height:1px;background:#dadada;"></div>
<div class="r" style="left:29px;top:285px;width:1315px;height:1px;background:#dadada;"></div>
<div class="r" style="left:29px;top:305px;width:1315px;height:1px;background:#dadada;"></div>
<div class="r" style="left:29px;top:325px;width:1315px;height:1px;background:#dadada;"></div>
<div class="r" style="left:29px;top:345px;width:1315px;height:1px;background:#dadada;"></div>
<div class="r" style="left:29px;top:365px;width:1315px;height:1px;background:#dadada;"></div>
<div class="r" style="left:29px;top:385px;width:1315px;height:1px;background:#dadada;"></div>
<div class="r" style="left:29px;top:405px;width:1315px;height:1px;background:#dadada;"></div>
<div class="r" style="left:29px;top:425px;width:1315px;height:1px;background:#dadada;"></div>
<div class="r" style="left:29px;top:445px;width:1315px;height:1px;background:#dadada;"></div>
<div class="r" style="left:29px;top:465px;width:1315px;height:1px;background:#dadada;"></div>
<div class="r" style="left:29px;top:485px;width:1315px;height:1px;background:#dadada;"></div>
<div class="r" style="left:29px;top:505px;width:1315px;height:1px;background:#dadada;"></div>
<div class="r" style="left:29px;top:525px;width:1315px;height:1px;background:#dadada;"></div>
<div class="r" style="left:29px;top:545px;width:1315px;height:1px;background:#dadada;"></div>
<div class="r" style="left:29px;top:565px;width:1315px;height:1px;background:#dadada;"></div>
<div class="r" style="left:29px;top:586px;width:1315px;height:1px;background:#dadada;"></div>
<div class="r" style="left:29px;top:607px;width:1315px;height:1px;background:#dadada;"></div>
<div class="r" style="left:29px;top:628px;width:1315px;height:1px;background:#dadada;"></div>
<div class="r" style="left:29px;top:649px;width:1315px;height:1px;background:#dadada;"></div>
<div class="r" style="left:29px;top:670px;width:1315px;height:1px;background:#dadada;"></div>
<div class="r" style="left:103px;top:207px;width:1px;height:471px;background:#dadada;"></div>
<div class="r" style="left:186px;top:207px;width:1px;height:471px;background:#dadada;"></div>
<div class="r" style="left:344px;top:207px;width:1px;height:471px;background:#dadada;"></div>
<div class="r" style="left:419px;top:207px;width:1px;height:471px;background:#dadada;"></div>
<div class="r" style="left:518px;top:207px;width:1px;height:471px;background:#dadada;"></div>
<div class="r" style="left:651px;top:207px;width:1px;height:471px;background:#dadada;"></div>
<div class="r" style="left:726px;top:207px;width:1px;height:471px;background:#dadada;"></div>
<div class="r" style="left:801px;top:207px;width:1px;height:471px;background:#dadada;"></div>
<div class="r" style="left:951px;top:207px;width:1px;height:471px;background:#dadada;"></div>
<div class="r" style="left:1099px;top:207px;width:1px;height:471px;background:#dadada;"></div>
<div class="r" style="left:0px;top:207px;width:28px;height:471px;background:#fff;"></div>
<div class="r" style="left:0px;top:226px;width:28px;height:1px;background:#e0e0e0;"></div>
<div class="r" style="left:0px;top:245px;width:28px;height:1px;background:#e0e0e0;"></div>
<div class="r" style="left:0px;top:265px;width:28px;height:1px;background:#e0e0e0;"></div>
<div class="r" style="left:0px;top:285px;width:28px;height:1px;background:#e0e0e0;"></div>
<div class="r" style="left:0px;top:305px;width:28px;height:1px;background:#e0e0e0;"></div>
<div class="r" style="left:0px;top:325px;width:28px;height:1px;background:#e0e0e0;"></div>
<div class="r" style="left:0px;top:345px;width:28px;height:1px;background:#e0e0e0;"></div>
<div class="r" style="left:0px;top:365px;width:28px;height:1px;background:#e0e0e0;"></div>
<div class="r" style="left:0px;top:385px;width:28px;height:1px;background:#e0e0e0;"></div>
<div class="r" style="left:0px;top:405px;width:28px;height:1px;background:#e0e0e0;"></div>
<div class="r" style="left:0px;top:425px;width:28px;height:1px;background:#e0e0e0;"></div>
<div class="r" style="left:0px;top:445px;width:28px;height:1px;background:#e0e0e0;"></div>
<div class="r" style="left:0px;top:465px;width:28px;height:1px;background:#e0e0e0;"></div>
<div class="r" style="left:0px;top:485px;width:28px;height:1px;background:#e0e0e0;"></div>
<div class="r" style="left:0px;top:505px;width:28px;height:1px;background:#e0e0e0;"></div>
<div class="r" style="left:0px;top:525px;width:28px;height:1px;background:#e0e0e0;"></div>
<div class="r" style="left:0px;top:545px;width:28px;height:1px;background:#e0e0e0;"></div>
<div class="r" style="left:0px;top:565px;width:28px;height:1px;background:#e0e0e0;"></div>
<div class="r" style="left:0px;top:586px;width:28px;height:1px;background:#e0e0e0;"></div>
<div class="r" style="left:0px;top:607px;width:28px;height:1px;background:#e0e0e0;"></div>
<div class="r" style="left:0px;top:628px;width:28px;height:1px;background:#e0e0e0;"></div>
<div class="r" style="left:0px;top:649px;width:28px;height:1px;background:#e0e0e0;"></div>
<div class="r" style="left:0px;top:670px;width:28px;height:1px;background:#e0e0e0;"></div>
<div class="r" style="left:28px;top:188px;width:1px;height:19px;background:#dcdcdc;"></div>
<div class="r" style="left:28px;top:207px;width:1px;height:471px;background:#9b9b9b;"></div>
<div class="r" style="left:0px;top:207px;width:1344px;height:1px;background:#9b9b9b;"></div>
<div class="r" style="left:1344px;top:207px;width:1px;height:471px;background:#9b9b9b;"></div>
<div class="t" style="left:10.79px;top:209.53px;font-size:14.5px;line-height:14.5px;color:#444;transform:scaleX(0.9200);transform-origin:0 0;">1</div>
<div class="t" style="left:10.79px;top:228.53px;font-size:14.5px;line-height:14.5px;color:#444;transform:scaleX(0.9200);transform-origin:0 0;">2</div>
<div class="t" style="left:10.79px;top:248.53px;font-size:14.5px;line-height:14.5px;color:#444;transform:scaleX(0.9200);transform-origin:0 0;">3</div>
<div class="t" style="left:10.79px;top:268.53px;font-size:14.5px;line-height:14.5px;color:#444;transform:scaleX(0.9200);transform-origin:0 0;">4</div>
<div class="t" style="left:10.79px;top:288.53px;font-size:14.5px;line-height:14.5px;color:#444;transform:scaleX(0.9200);transform-origin:0 0;">5</div>
<div class="t" style="left:10.79px;top:308.53px;font-size:14.5px;line-height:14.5px;color:#444;transform:scaleX(0.9200);transform-origin:0 0;">6</div>
<div class="t" style="left:10.79px;top:328.53px;font-size:14.5px;line-height:14.5px;color:#444;transform:scaleX(0.9200);transform-origin:0 0;">7</div>
<div class="t" style="left:10.79px;top:348.53px;font-size:14.5px;line-height:14.5px;color:#444;transform:scaleX(0.9200);transform-origin:0 0;">8</div>
<div class="t" style="left:10.79px;top:368.53px;font-size:14.5px;line-height:14.5px;color:#444;transform:scaleX(0.9200);transform-origin:0 0;">9</div>
<div class="t" style="left:7.08px;top:388.53px;font-size:14.5px;line-height:14.5px;color:#444;transform:scaleX(0.9200);transform-origin:0 0;">10</div>
<div class="t" style="left:7.58px;top:408.53px;font-size:14.5px;line-height:14.5px;color:#444;transform:scaleX(0.9200);transform-origin:0 0;">11</div>
<div class="t" style="left:7.08px;top:428.53px;font-size:14.5px;line-height:14.5px;color:#444;transform:scaleX(0.9200);transform-origin:0 0;">12</div>
<div class="t" style="left:7.08px;top:448.53px;font-size:14.5px;line-height:14.5px;color:#444;transform:scaleX(0.9200);transform-origin:0 0;">13</div>
<div class="t" style="left:7.08px;top:468.53px;font-size:14.5px;line-height:14.5px;color:#444;transform:scaleX(0.9200);transform-origin:0 0;">14</div>
<div class="t" style="left:7.08px;top:488.53px;font-size:14.5px;line-height:14.5px;color:#444;transform:scaleX(0.9200);transform-origin:0 0;">15</div>
<div class="t" style="left:7.08px;top:508.53px;font-size:14.5px;line-height:14.5px;color:#444;transform:scaleX(0.9200);transform-origin:0 0;">16</div>
<div class="t" style="left:7.08px;top:528.53px;font-size:14.5px;line-height:14.5px;color:#444;transform:scaleX(0.9200);transform-origin:0 0;">17</div>
<div class="t" style="left:7.08px;top:548.33px;font-size:14.5px;line-height:14.5px;color:#444;transform:scaleX(0.9200);transform-origin:0 0;">18</div>
<div class="t" style="left:7.08px;top:569.33px;font-size:14.5px;line-height:14.5px;color:#444;transform:scaleX(0.9200);transform-origin:0 0;">19</div>
<div class="t" style="left:7.08px;top:590.33px;font-size:14.5px;line-height:14.5px;color:#444;transform:scaleX(0.9200);transform-origin:0 0;">20</div>
<div class="t" style="left:7.08px;top:611.33px;font-size:14.5px;line-height:14.5px;color:#444;transform:scaleX(0.9200);transform-origin:0 0;">21</div>
<div class="t" style="left:7.08px;top:632.33px;font-size:14.5px;line-height:14.5px;color:#444;transform:scaleX(0.9200);transform-origin:0 0;">22</div>
<div class="t" style="left:7.08px;top:653.33px;font-size:14.5px;line-height:14.5px;color:#444;transform:scaleX(0.9200);transform-origin:0 0;">23</div>
<div style="position:absolute;left:0;top:670px;width:28px;height:8px;overflow:hidden;">
<div class="t" style="left:6.44px;top:2.23px;font-size:14.5px;line-height:14.5px;color:#444;transform-origin:0 0;">24</div>
</div>
<div class="r" style="left:651px;top:525px;width:76px;height:21px;background:#fff2cc;"></div>
<div class="r" style="left:726px;top:525px;width:76px;height:21px;background:#c6e0b4;"></div>
<div class="r" style="left:801px;top:525px;width:151px;height:21px;background:#ffd966;"></div>
<div class="r" style="left:951px;top:525px;width:149px;height:21px;background:#9bc2e6;"></div>
<div class="r" style="left:344px;top:586px;width:76px;height:22px;background:#ffe699;"></div>
<div class="r" style="left:420px;top:586px;width:232px;height:22px;background:#ff3399;"></div>
<div class="r" style="left:344px;top:671px;width:75px;height:7px;background:#ffe699;"></div>
<div class="t" style="left:31.80px;top:249.50px;font-size:13px;line-height:13px;color:#111;transform:scaleX(0.9147);transform-origin:0 0;">FACTURA</div>
<div class="t" style="left:189.00px;top:249.50px;font-size:13px;line-height:13px;color:#111;transform:scaleX(0.9237);transform-origin:0 0;">PRODUCTO</div>
<div class="t" style="left:347.50px;top:249.50px;font-size:13px;line-height:13px;color:#111;transform:scaleX(0.9662);transform-origin:0 0;">CANTIDAD</div>
<div class="t" style="left:422.60px;top:249.50px;font-size:13px;line-height:13px;color:#111;transform:scaleX(0.9245);transform-origin:0 0;">PRECIO VENTA</div>
<div class="t" style="left:521.20px;top:249.50px;font-size:13px;line-height:13px;color:#111;transform:scaleX(0.8798);transform-origin:0 0;">PRECIO DE COSTE</div>
<div class="t" style="left:654.50px;top:249.50px;font-size:13px;line-height:13px;color:#111;transform:scaleX(0.9993);transform-origin:0 0;">A MARIA</div>
<div class="t" style="left:729.00px;top:249.50px;font-size:13px;line-height:13px;color:#111;transform:scaleX(0.9686);transform-origin:0 0;">A ISA</div>
<div class="t" style="left:804.20px;top:249.50px;font-size:13px;line-height:13px;color:#111;transform:scaleX(0.9350);transform-origin:0 0;">BENEFICIO EQUINAE</div>
<div class="t" style="left:954.00px;top:249.50px;font-size:13px;line-height:13px;color:#111;transform:scaleX(0.9361);transform-origin:0 0;">IMPORTE FACTURA</div>
<div class="r" style="left:103px;top:266px;width:1px;height:19px;background:#fff;"></div>
<div class="t" style="left:31.80px;top:269.50px;font-size:13px;line-height:13px;color:#111;transform:scaleX(1.0000);transform-origin:0 0;">Pedido #123072</div>
<div class="t" style="left:189.50px;top:269.54px;font-size:13.3px;line-height:13.3px;color:#3c3c3c;transform:scaleX(0.9629);transform-origin:0 0;">BOX ONE 45mm</div>
<div class="t" style="right:949.00px;top:269.50px;font-size:13px;line-height:13px;color:#111;transform-origin:100% 0;">1</div>
<div class="t" style="right:850.00px;top:269.50px;font-size:13px;line-height:13px;color:#111;transform-origin:100% 0;">38,00</div>
<div class="t" style="right:717.00px;top:269.50px;font-size:13px;line-height:13px;color:#111;transform-origin:100% 0;">18,97</div>
<div class="t" style="right:642.00px;top:269.50px;font-size:13px;line-height:13px;color:#111;transform-origin:100% 0;">0,60</div>
<div class="t" style="right:567.00px;top:269.50px;font-size:13px;line-height:13px;color:#111;transform-origin:100% 0;">0,00</div>
<div class="t" style="right:417.00px;top:269.50px;font-size:13px;line-height:13px;color:#111;transform-origin:100% 0;">18,43</div>
<div class="t" style="right:269.00px;top:269.50px;font-size:13px;line-height:13px;color:#111;transform-origin:100% 0;">_</div>
<div class="t" style="left:189.50px;top:289.54px;font-size:13.3px;line-height:13.3px;color:#3c3c3c;transform:scaleX(0.9657);transform-origin:0 0;">Paño a medida 2&#x27;60 x 2&#x27;00</div>
<div class="t" style="right:949.00px;top:289.50px;font-size:13px;line-height:13px;color:#111;transform-origin:100% 0;">1</div>
<div class="t" style="right:850.00px;top:289.50px;font-size:13px;line-height:13px;color:#111;transform-origin:100% 0;">85,00</div>
<div class="t" style="right:717.00px;top:289.50px;font-size:13px;line-height:13px;color:#111;transform-origin:100% 0;">41,37</div>
<div class="t" style="right:642.00px;top:289.50px;font-size:13px;line-height:13px;color:#111;transform-origin:100% 0;">0,00</div>
<div class="t" style="right:567.00px;top:289.50px;font-size:13px;line-height:13px;color:#111;transform-origin:100% 0;">0,00</div>
<div class="t" style="right:417.00px;top:289.50px;font-size:13px;line-height:13px;color:#111;transform-origin:100% 0;">43,63</div>
<div class="t" style="right:269.00px;top:289.50px;font-size:13px;line-height:13px;color:#111;transform-origin:100% 0;">123,00</div>
<div style="position:absolute;left:1099px;top:285px;width:245px;height:20px;overflow:hidden;">
<div class="t" style="left:3px;top:4.50px;font-size:13px;line-height:13px;color:#111;transform:scaleX(0.9591);transform-origin:0 0;">TR A ING 19052022 (85) + TR A ING 25052</div>
</div>
<div class="r" style="left:103px;top:306px;width:1px;height:19px;background:#fff;"></div>
<div class="t" style="left:31.80px;top:309.50px;font-size:13px;line-height:13px;color:#111;transform:scaleX(1.0000);transform-origin:0 0;">Pedido #123073</div>
<div class="t" style="left:189.50px;top:309.54px;font-size:13.3px;line-height:13.3px;color:#3c3c3c;transform:scaleX(0.9762);transform-origin:0 0;">SACK MEDIUM 60mm</div>
<div class="t" style="right:949.00px;top:309.50px;font-size:13px;line-height:13px;color:#111;transform-origin:100% 0;">1</div>
<div class="t" style="right:850.00px;top:309.50px;font-size:13px;line-height:13px;color:#111;transform-origin:100% 0;">48,80</div>
<div class="t" style="right:717.00px;top:309.50px;font-size:13px;line-height:13px;color:#111;transform-origin:100% 0;">24,46</div>
<div class="t" style="right:642.00px;top:309.50px;font-size:13px;line-height:13px;color:#111;transform-origin:100% 0;">0,60</div>
<div class="t" style="right:567.00px;top:309.50px;font-size:13px;line-height:13px;color:#111;transform-origin:100% 0;">0,00</div>
<div class="t" style="right:417.00px;top:309.50px;font-size:13px;line-height:13px;color:#111;transform-origin:100% 0;">23,74</div>
<div class="t" style="right:269.00px;top:309.50px;font-size:13px;line-height:13px;color:#111;transform-origin:100% 0;">_</div>
<div class="t" style="left:189.50px;top:329.54px;font-size:13.3px;line-height:13.3px;color:#3c3c3c;transform:scaleX(0.9815);transform-origin:0 0;">PADDOCK ONE 45mm</div>
<div class="t" style="right:949.00px;top:329.50px;font-size:13px;line-height:13px;color:#111;transform-origin:100% 0;">1</div>
<div class="t" style="right:850.00px;top:329.50px;font-size:13px;line-height:13px;color:#111;transform-origin:100% 0;">56,00</div>
<div class="t" style="right:717.00px;top:329.50px;font-size:13px;line-height:13px;color:#111;transform-origin:100% 0;">32,27</div>
<div class="t" style="right:642.00px;top:329.50px;font-size:13px;line-height:13px;color:#111;transform-origin:100% 0;">0,60</div>
<div class="t" style="right:567.00px;top:329.50px;font-size:13px;line-height:13px;color:#111;transform-origin:100% 0;">0,00</div>
<div class="t" style="right:417.00px;top:329.50px;font-size:13px;line-height:13px;color:#111;transform-origin:100% 0;">23,13</div>
<div class="t" style="right:269.00px;top:329.50px;font-size:13px;line-height:13px;color:#111;transform-origin:100% 0;">_</div>
<div class="t" style="left:189.50px;top:349.54px;font-size:13.3px;line-height:13.3px;color:#3c3c3c;transform:scaleX(0.9888);transform-origin:0 0;">SACK SMALL 35mm</div>
<div class="t" style="right:949.00px;top:349.50px;font-size:13px;line-height:13px;color:#111;transform-origin:100% 0;">1</div>
<div class="t" style="right:850.00px;top:349.50px;font-size:13px;line-height:13px;color:#111;transform-origin:100% 0;">32,80</div>
<div class="t" style="right:717.00px;top:349.50px;font-size:13px;line-height:13px;color:#111;transform-origin:100% 0;">15,10</div>
<div class="t" style="right:642.00px;top:349.50px;font-size:13px;line-height:13px;color:#111;transform-origin:100% 0;">0,60</div>
<div class="t" style="right:567.00px;top:349.50px;font-size:13px;line-height:13px;color:#111;transform-origin:100% 0;">0,00</div>
<div class="t" style="right:417.00px;top:349.50px;font-size:13px;line-height:13px;color:#111;transform-origin:100% 0;">17,10</div>
<div class="t" style="right:269.00px;top:349.50px;font-size:13px;line-height:13px;color:#111;transform-origin:100% 0;">137,60</div>
<div style="position:absolute;left:1099px;top:345px;width:245px;height:20px;overflow:hidden;">
<div class="t" style="left:3px;top:4.50px;font-size:13px;line-height:13px;color:#111;transform:scaleX(0.9191);transform-origin:0 0;">TRF RURAL  09062022</div>
</div>
<div class="r" style="left:103px;top:366px;width:1px;height:19px;background:#fff;"></div>
<div class="t" style="left:31.80px;top:369.50px;font-size:13px;line-height:13px;color:#111;transform:scaleX(1.0000);transform-origin:0 0;">Pedido #123075</div>
<div class="t" style="left:189.50px;top:369.54px;font-size:13.3px;line-height:13.3px;color:#3c3c3c;transform:scaleX(0.9652);transform-origin:0 0;">BOX ONE 60 mm</div>
<div class="t" style="right:949.00px;top:369.50px;font-size:13px;line-height:13px;color:#111;transform-origin:100% 0;">1</div>
<div class="t" style="right:850.00px;top:369.50px;font-size:13px;line-height:13px;color:#111;transform-origin:100% 0;">34,00</div>
<div class="t" style="right:717.00px;top:369.50px;font-size:13px;line-height:13px;color:#111;transform-origin:100% 0;">13,02</div>
<div class="t" style="right:642.00px;top:369.50px;font-size:13px;line-height:13px;color:#111;transform-origin:100% 0;">0,60</div>
<div class="t" style="right:567.00px;top:369.50px;font-size:13px;line-height:13px;color:#111;transform-origin:100% 0;">0,00</div>
<div class="t" style="right:417.00px;top:369.50px;font-size:13px;line-height:13px;color:#111;transform-origin:100% 0;">20,38</div>
<div class="t" style="right:269.00px;top:369.50px;font-size:13px;line-height:13px;color:#111;transform-origin:100% 0;">34,00</div>
<div style="position:absolute;left:1099px;top:365px;width:245px;height:20px;overflow:hidden;">
<div class="t" style="left:3px;top:4.50px;font-size:13px;line-height:13px;color:#111;transform:scaleX(0.9705);transform-origin:0 0;">TR  MARIA A ING 08062022</div>
</div>
<div class="r" style="left:103px;top:386px;width:1px;height:19px;background:#fff;"></div>
<div class="t" style="left:31.80px;top:389.50px;font-size:13px;line-height:13px;color:#111;transform:scaleX(1.0000);transform-origin:0 0;">Pedido #123076</div>
<div class="t" style="left:189.50px;top:389.54px;font-size:13.3px;line-height:13.3px;color:#3c3c3c;transform:scaleX(0.9888);transform-origin:0 0;">SACK SMALL 45mm</div>
<div class="t" style="right:949.00px;top:389.50px;font-size:13px;line-height:13px;color:#111;transform-origin:100% 0;">2</div>
<div class="t" style="right:850.00px;top:389.50px;font-size:13px;line-height:13px;color:#111;transform-origin:100% 0;">64,00</div>
<div class="t" style="right:717.00px;top:389.50px;font-size:13px;line-height:13px;color:#111;transform-origin:100% 0;">30,38</div>
<div class="t" style="right:642.00px;top:389.50px;font-size:13px;line-height:13px;color:#111;transform-origin:100% 0;">0,60</div>
<div class="t" style="right:567.00px;top:389.50px;font-size:13px;line-height:13px;color:#111;transform-origin:100% 0;">0,00</div>
<div class="t" style="right:417.00px;top:389.50px;font-size:13px;line-height:13px;color:#111;transform-origin:100% 0;">33,02</div>
<div class="t" style="right:269.00px;top:389.50px;font-size:13px;line-height:13px;color:#111;transform-origin:100% 0;">_</div>
<div class="t" style="left:189.50px;top:409.54px;font-size:13.3px;line-height:13.3px;color:#3c3c3c;transform:scaleX(0.9762);transform-origin:0 0;">SACK MEDIUM 45mm</div>
<div class="t" style="right:949.00px;top:409.50px;font-size:13px;line-height:13px;color:#111;transform-origin:100% 0;">2</div>
<div class="t" style="right:850.00px;top:409.50px;font-size:13px;line-height:13px;color:#111;transform-origin:100% 0;">96,00</div>
<div class="t" style="right:717.00px;top:409.50px;font-size:13px;line-height:13px;color:#111;transform-origin:100% 0;">45,38</div>
<div class="t" style="right:642.00px;top:409.50px;font-size:13px;line-height:13px;color:#111;transform-origin:100% 0;">0,60</div>
<div class="t" style="right:567.00px;top:409.50px;font-size:13px;line-height:13px;color:#111;transform-origin:100% 0;">0,00</div>
<div class="t" style="right:417.00px;top:409.50px;font-size:13px;line-height:13px;color:#111;transform-origin:100% 0;">50,03</div>
<div class="t" style="right:269.00px;top:409.50px;font-size:13px;line-height:13px;color:#111;transform-origin:100% 0;">160,00</div>
<div style="position:absolute;left:1099px;top:405px;width:245px;height:20px;overflow:hidden;">
<div class="t" style="left:3px;top:4.50px;font-size:13px;line-height:13px;color:#111;transform:scaleX(0.9705);transform-origin:0 0;">TR  MARIA A ING 08062022</div>
</div>
<div class="r" style="left:103px;top:426px;width:1px;height:19px;background:#fff;"></div>
<div class="t" style="left:31.80px;top:429.50px;font-size:13px;line-height:13px;color:#111;transform:scaleX(1.0000);transform-origin:0 0;">Pedido #123079</div>
<div class="t" style="left:189.50px;top:429.54px;font-size:13.3px;line-height:13.3px;color:#3c3c3c;transform:scaleX(0.9822);transform-origin:0 0;text-decoration:underline;">PADDOCK ONE 45mm</div>
<div class="t" style="right:949.00px;top:429.50px;font-size:13px;line-height:13px;color:#111;transform-origin:100% 0;">1</div>
<div class="t" style="right:850.00px;top:429.50px;font-size:13px;line-height:13px;color:#111;transform-origin:100% 0;">47,60</div>
<div class="t" style="right:717.00px;top:429.50px;font-size:13px;line-height:13px;color:#111;transform-origin:100% 0;">32,27</div>
<div class="t" style="right:642.00px;top:429.50px;font-size:13px;line-height:13px;color:#111;transform-origin:100% 0;">0,60</div>
<div class="t" style="right:567.00px;top:429.50px;font-size:13px;line-height:13px;color:#111;transform-origin:100% 0;">0,00</div>
<div class="t" style="right:417.00px;top:429.50px;font-size:13px;line-height:13px;color:#111;transform-origin:100% 0;">14,73</div>
<div class="t" style="right:269.00px;top:429.50px;font-size:13px;line-height:13px;color:#111;transform-origin:100% 0;">52,60</div>
<div style="position:absolute;left:1099px;top:425px;width:245px;height:20px;overflow:hidden;">
<div class="t" style="left:3px;top:4.50px;font-size:13px;line-height:13px;color:#111;transform:scaleX(0.9370);transform-origin:0 0;">TPV RURAL 10062022</div>
</div>
<div class="r" style="left:103px;top:446px;width:1px;height:19px;background:#fff;"></div>
<div class="t" style="left:31.80px;top:449.50px;font-size:13px;line-height:13px;color:#111;transform:scaleX(1.0000);transform-origin:0 0;">Pedido #123088</div>
<div style="position:absolute;left:186px;top:445px;width:158px;height:20px;overflow:hidden;">
<div class="t" style="left:3.5px;top:4.54px;font-size:13.3px;line-height:13.3px;color:#3c3c3c;text-decoration:underline;transform:scaleX(0.9689);transform-origin:0 0;">EQUIALGAE– Suplemento</div>
</div>
<div class="t" style="right:949.00px;top:449.50px;font-size:13px;line-height:13px;color:#111;transform-origin:100% 0;">3</div>
<div class="t" style="right:850.00px;top:449.50px;font-size:13px;line-height:13px;color:#111;transform-origin:100% 0;">111,01</div>
<div class="t" style="right:717.00px;top:449.50px;font-size:13px;line-height:13px;color:#111;transform-origin:100% 0;">70,32</div>
<div class="t" style="right:642.00px;top:449.50px;font-size:13px;line-height:13px;color:#111;transform-origin:100% 0;">0,00</div>
<div class="t" style="right:567.00px;top:449.50px;font-size:13px;line-height:13px;color:#111;transform-origin:100% 0;">0,00</div>
<div class="t" style="right:417.00px;top:449.50px;font-size:13px;line-height:13px;color:#111;transform-origin:100% 0;">40,69</div>
<div class="t" style="right:269.00px;top:449.50px;font-size:13px;line-height:13px;color:#111;transform-origin:100% 0;">115,20</div>
<div style="position:absolute;left:1099px;top:445px;width:245px;height:20px;overflow:hidden;">
<div class="t" style="left:3px;top:4.50px;font-size:13px;line-height:13px;color:#111;transform:scaleX(0.9763);transform-origin:0 0;">TR  MARIA A ING 26112022</div>
</div>
<div class="r" style="left:103px;top:466px;width:1px;height:19px;background:#fff;"></div>
<div class="t" style="left:31.80px;top:469.50px;font-size:13px;line-height:13px;color:#111;transform:scaleX(1.0000);transform-origin:0 0;">Pedido #123090</div>
<div class="t" style="left:189.50px;top:469.54px;font-size:13.3px;line-height:13.3px;color:#3c3c3c;transform:scaleX(0.9629);transform-origin:0 0;text-decoration:underline;">BOX ONE 45mm</div>
<div class="t" style="right:949.00px;top:469.50px;font-size:13px;line-height:13px;color:#111;transform-origin:100% 0;">2</div>
<div class="t" style="right:850.00px;top:469.50px;font-size:13px;line-height:13px;color:#111;transform-origin:100% 0;">64,61</div>
<div class="t" style="right:717.00px;top:469.50px;font-size:13px;line-height:13px;color:#111;transform-origin:100% 0;">37,93</div>
<div class="t" style="right:642.00px;top:469.50px;font-size:13px;line-height:13px;color:#111;transform-origin:100% 0;">0,60</div>
<div class="t" style="right:567.00px;top:469.50px;font-size:13px;line-height:13px;color:#111;transform-origin:100% 0;">0,00</div>
<div class="t" style="right:417.00px;top:469.50px;font-size:13px;line-height:13px;color:#111;transform-origin:100% 0;">26,08</div>
<div class="t" style="right:269.00px;top:469.50px;font-size:13px;line-height:13px;color:#111;transform-origin:100% 0;">64,61</div>
<div style="position:absolute;left:1099px;top:465px;width:245px;height:20px;overflow:hidden;">
<div class="t" style="left:3px;top:4.50px;font-size:13px;line-height:13px;color:#111;transform:scaleX(0.9278);transform-origin:0 0;">TR CAJA RURAL 20062022</div>
</div>
<div class="r" style="left:103px;top:486px;width:1px;height:19px;background:#fff;"></div>
<div class="t" style="left:31.80px;top:489.50px;font-size:13px;line-height:13px;color:#111;transform:scaleX(1.0000);transform-origin:0 0;">Pedido #123091</div>
<div class="t" style="left:189.50px;top:489.54px;font-size:13.3px;line-height:13.3px;color:#3c3c3c;transform:scaleX(0.9755);transform-origin:0 0;">SACK MEDIUM 35mm</div>
<div class="t" style="right:949.00px;top:489.50px;font-size:13px;line-height:13px;color:#111;transform-origin:100% 0;">1</div>
<div class="t" style="right:850.00px;top:489.50px;font-size:13px;line-height:13px;color:#111;transform-origin:100% 0;">40,33</div>
<div class="t" style="right:717.00px;top:489.50px;font-size:13px;line-height:13px;color:#111;transform-origin:100% 0;">22,51</div>
<div class="t" style="right:642.00px;top:489.50px;font-size:13px;line-height:13px;color:#111;transform-origin:100% 0;">0,60</div>
<div class="t" style="right:567.00px;top:489.50px;font-size:13px;line-height:13px;color:#111;transform-origin:100% 0;">0,00</div>
<div class="t" style="right:417.00px;top:489.50px;font-size:13px;line-height:13px;color:#111;transform-origin:100% 0;">17,22</div>
<div class="t" style="right:269.00px;top:489.50px;font-size:13px;line-height:13px;color:#111;transform-origin:100% 0;">53,80</div>
<div style="position:absolute;left:1099px;top:485px;width:245px;height:20px;overflow:hidden;">
<div class="t" style="left:3px;top:4.50px;font-size:13px;line-height:13px;color:#111;transform:scaleX(0.9370);transform-origin:0 0;">TPV RURAL 29062022</div>
</div>
<svg class="s" style="left:802px;top:286px;" width="5" height="5" viewBox="0 0 5 5"><path d="M0 0H5L0 5Z" fill="#1e8c3a"/></svg>
<svg class="s" style="left:802px;top:446px;" width="5" height="5" viewBox="0 0 5 5"><path d="M0 0H5L0 5Z" fill="#1e8c3a"/></svg>
<div class="t" style="right:642.00px;top:529.50px;font-size:13px;line-height:13px;color:#111;transform-origin:100% 0;">6,00</div>
<div class="t" style="right:567.00px;top:529.50px;font-size:13px;line-height:13px;color:#111;transform-origin:100% 0;">0,00</div>
<div class="t" style="right:417.00px;top:529.50px;font-size:13px;line-height:13px;color:#111;transform-origin:100% 0;">328,18</div>
<div class="t" style="right:269.00px;top:529.50px;font-size:13px;line-height:13px;color:#111;transform-origin:100% 0;">740,81</div>
<div class="r" style="left:103px;top:587px;width:1px;height:20px;background:#fff;"></div>
<div class="t" style="left:31.80px;top:591.90px;font-size:13px;line-height:13px;color:#111;transform:scaleX(0.9474);transform-origin:0 0;">TOTAL A RETIRAR  MARIA</div>
<div class="t" style="left:377.30px;top:591.90px;font-size:13px;line-height:13px;color:#111;transform:scaleX(0.9841);transform-origin:0 0;">6,00</div>
<div class="r" style="left:1345px;top:187px;width:21px;height:491px;background:#fff;"></div>
<div class="r" style="left:1348px;top:207px;width:15px;height:471px;background:#f0f0f0;"></div>
<div class="r" style="left:1348px;top:191px;width:15px;height:15px;background:#fff;border:1px solid #ababab;box-sizing:border-box;"></div>
<svg class="s" style="left:1352px;top:196px;" width="7" height="4" viewBox="0 0 7 4"><path d="M0 4L3.5 0L7 4Z" fill="#606060"/></svg>
<div class="r" style="left:1348px;top:206px;width:15px;height:17px;background:#fff;border:1px solid #ababab;box-sizing:border-box;"></div>
<div class="r" style="left:1348px;top:664px;width:15px;height:14px;background:#fff;border:1px solid #ababab;box-sizing:border-box;"></div>
<svg class="s" style="left:1352px;top:669px;" width="7" height="4" viewBox="0 0 7 4"><path d="M0 0L3.5 4L7 0Z" fill="#606060"/></svg>
<div class="r" style="left:0px;top:678px;width:1366px;height:28px;background:#f3f3f3;"></div>
<div class="r" style="left:0px;top:678px;width:457px;height:1px;background:#ababab;"></div>
<div class="r" style="left:521px;top:678px;width:823px;height:1px;background:#ababab;"></div>
<svg class="s" style="left:26px;top:688px;" width="5" height="7" viewBox="0 0 5 7"><path d="M5 0V7L0 3.5Z" fill="#1e4d35"/></svg>
<svg class="s" style="left:55px;top:688px;" width="5" height="7" viewBox="0 0 5 7"><path d="M0 0V7L5 3.5Z" fill="#1e4d35"/></svg>
<div class="t" style="left:80.50px;top:686.00px;font-size:13px;line-height:13px;color:#222;font-weight:bold;transform:scaleX(1.0614);transform-origin:0 0;">...</div>
<div class="r" style="left:100px;top:681px;width:1px;height:22px;background:#c8c8c8;"></div>
<div class="r" style="left:103px;top:681px;width:74px;height:22px;background:#548235;"></div>
<div class="t" style="left:113.50px;top:686.02px;font-size:12.5px;line-height:12.5px;color:#f2f7e8;transform:scaleX(0.8622);transform-origin:0 0;">FEBRERO</div>
<div class="r" style="left:182px;top:681px;width:66px;height:22px;background:#548235;"></div>
<div class="t" style="left:192.00px;top:686.02px;font-size:12.5px;line-height:12.5px;color:#f2f7e8;transform:scaleX(0.9748);transform-origin:0 0;">MARZO</div>
<div class="r" style="left:253px;top:681px;width:55px;height:22px;background:#548235;"></div>
<div class="t" style="left:264.00px;top:686.02px;font-size:12.5px;line-height:12.5px;color:#f2f7e8;transform:scaleX(0.8857);transform-origin:0 0;">ABRIL</div>
<div class="r" style="left:313px;top:681px;width:79px;height:22px;background:#ff0000;"></div>
<div class="t" style="left:322.40px;top:686.02px;font-size:12.5px;line-height:12.5px;color:#f2f7e8;transform:scaleX(0.9487);transform-origin:0 0;">RESUMEN</div>
<div class="r" style="left:397px;top:681px;width:58px;height:22px;background:#548235;"></div>
<div class="t" style="left:407.40px;top:686.02px;font-size:12.5px;line-height:12.5px;color:#f2f7e8;transform:scaleX(1.0144);transform-origin:0 0;">MAYO</div>
<div class="r" style="left:179px;top:681px;width:1px;height:22px;background:#c8c8c8;"></div>
<div class="r" style="left:250px;top:681px;width:1px;height:22px;background:#c8c8c8;"></div>
<div class="r" style="left:310px;top:681px;width:1px;height:22px;background:#c8c8c8;"></div>
<div class="r" style="left:394px;top:681px;width:1px;height:22px;background:#c8c8c8;"></div>
<div class="r" style="left:457px;top:678px;width:64px;height:25px;background:#fff;border-left:1px solid #ababab;border-right:1px solid #ababab;box-sizing:border-box;"></div>
<div class="r" style="left:459px;top:681px;width:61px;height:20px;background:linear-gradient(#ffffff 0%, #f4f7f1 40%, #c9d6bd 100%);"></div>
<div class="r" style="left:457px;top:701px;width:64px;height:2px;background:#2d6a45;"></div>
<div class="t" style="left:469.30px;top:685.92px;font-size:12.5px;line-height:12.5px;color:#2b6a45;font-weight:bold;transform:scaleX(1.0104);transform-origin:0 0;">JUNIO</div>
<div class="t" style="left:533.70px;top:685.54px;font-size:12px;line-height:12px;color:#444;transform:scaleX(0.9292);transform-origin:0 0;">JULIO</div>
<div class="t" style="left:593.00px;top:685.54px;font-size:12px;line-height:12px;color:#444;transform:scaleX(0.9898);transform-origin:0 0;">AGOSTO</div>
<div class="t" style="left:671.00px;top:685.54px;font-size:12px;line-height:12px;color:#444;transform:scaleX(0.9269);transform-origin:0 0;">SEPTIEMBRE</div>
<div class="r" style="left:580px;top:683px;width:1px;height:19px;background:#c8c8c8;"></div>
<div class="r" style="left:657px;top:683px;width:1px;height:19px;background:#c8c8c8;"></div>
<div class="t" style="left:758.00px;top:686.00px;font-size:13px;line-height:13px;color:#222;font-weight:bold;transform:scaleX(1.1076);transform-origin:0 0;">...</div>
<svg class="s" style="left:782px;top:682px;" width="18" height="18" viewBox="0 0 18 18"><circle cx="9" cy="9" r="7.6" fill="none" stroke="#666" stroke-width="1.3"/><path d="M9 4.5V13.5M4.5 9H13.5" stroke="#555" stroke-width="1.6"/></svg>
<svg class="s" style="left:819px;top:685px;" width="2" height="14" viewBox="0 0 2 14"><rect y="0" width="2" height="2" fill="#aaa"/><rect y="5.5" width="2" height="2" fill="#aaa"/><rect y="11" width="2" height="2" fill="#aaa"/></svg>
<div class="r" style="left:836px;top:685px;width:494px;height:14px;background:#e6e6e6;"></div>
<div class="r" style="left:836px;top:685px;width:15px;height:14px;background:#fff;border:1px solid #ababab;box-sizing:border-box;"></div>
<svg class="s" style="left:841px;top:689px;" width="4" height="7" viewBox="0 0 4 7"><path d="M4 0V7L0 3.5Z" fill="#606060"/></svg>
<div class="r" style="left:850px;top:685px;width:241px;height:14px;background:#fff;border:1px solid #ababab;box-sizing:border-box;"></div>
<div class="r" style="left:1330px;top:685px;width:15px;height:14px;background:#fff;border:1px solid #ababab;box-sizing:border-box;"></div>
<svg class="s" style="left:1335px;top:689px;" width="4" height="7" viewBox="0 0 4 7"><path d="M0 0V7L4 3.5Z" fill="#606060"/></svg>
<div class="r" style="left:0px;top:706px;width:1366px;height:22px;background:#217346;"></div>
<div class="t" style="left:7.30px;top:711.27px;font-size:11.5px;line-height:11.5px;color:#fff;transform:scaleX(0.8206);transform-origin:0 0;">LISTO</div>
<div class="r" style="left:1070px;top:706px;width:39px;height:22px;background:#146b3a;"></div>
<svg class="s" style="left:1083px;top:710px;" width="13" height="13" viewBox="0 0 13 13"><rect x="0.5" y="0.5" width="12" height="12" fill="none" stroke="#fff"/><path d="M4.5 0.5V12.5M8.5 0.5V12.5M0.5 4.5H12.5M0.5 8.5H12.5" stroke="#fff"/></svg>
<svg class="s" style="left:1120px;top:710px;" width="15" height="14" viewBox="0 0 15 14"><rect x="0.5" y="0.5" width="14" height="13" fill="none" stroke="#fff"/><rect x="3.5" y="3" width="8" height="8" fill="none" stroke="#fff"/><path d="M5 5.5H10M5 8H10" stroke="#fff"/></svg>
<svg class="s" style="left:1159px;top:710px;" width="14" height="14" viewBox="0 0 14 14"><rect x="0.5" y="0.5" width="13" height="13" fill="none" stroke="#fff"/><rect x="2" y="1" width="4" height="6" fill="#fff"/><rect x="8" y="1" width="4" height="9" fill="#fff"/></svg>
<div class="r" style="left:1190px;top:716px;width:6px;height:2px;background:#fff;"></div>
<div class="r" style="left:1201px;top:716px;width:98px;height:1px;background:#fff;"></div>
<div class="r" style="left:1249px;top:711px;width:4px;height:11px;background:#fff;"></div>
<div class="r" style="left:1304px;top:716px;width:9px;height:2px;background:#fff;"></div>
<div class="r" style="left:1307.5px;top:712.5px;width:2px;height:9px;background:#fff;"></div>
<div class="t" style="left:1328.00px;top:711.27px;font-size:11.5px;line-height:11.5px;color:#fff;transform:scaleX(0.8894);transform-origin:0 0;">100 %</div>
<div class="r" style="left:0px;top:728px;width:1366px;height:40px;background:#1e2d3d;"></div>
<svg class="s" style="left:16px;top:740px;" width="16" height="16" viewBox="0 0 16 16"><path d="M0 2.2L6.6 1.3V7.6H0Z M7.4 1.2L16 0V7.6H7.4Z M0 8.4H6.6V14.7L0 13.8Z M7.4 8.4H16V16L7.4 14.8Z" fill="#fff"/></svg>
<div class="r" style="left:48px;top:728px;width:344px;height:40px;background:#f0f0f0;"></div>
<svg class="s" style="left:60px;top:740px;" width="17" height="17" viewBox="0 0 17 17"><circle cx="10.5" cy="6.5" r="5.5" fill="none" stroke="#222" stroke-width="1.4"/><path d="M6.5 10.5L1 16" stroke="#222" stroke-width="1.6"/></svg>
<div class="t" style="left:88.00px;top:741.23px;font-size:14.5px;line-height:14.5px;color:#333;transform:scaleX(0.9987);transform-origin:0 0;">Escribe aquí para buscar</div>
<svg class="s" style="left:316px;top:728px;" width="76" height="40" viewBox="0 0 76 40"><defs><radialGradient id="haze" cx="0.6" cy="0.9" r="0.7"><stop offset="0" stop-color="#e3d2ee"/><stop offset="0.6" stop-color="#ece3f1"/><stop offset="1" stop-color="#f0f0f0"/></radialGradient>
<radialGradient id="sun" cx="0.5" cy="0.5" r="0.5"><stop offset="0" stop-color="#f7d77a"/><stop offset="1" stop-color="#f7d77a" stop-opacity="0"/></radialGradient></defs>
<rect width="76" height="40" fill="url(#haze)"/><circle cx="22" cy="14" r="9" fill="url(#sun)"/>
<defs><linearGradient id="mtn" x1="0" y1="0" x2="0" y2="1"><stop offset="0" stop-color="#8a7aa8"/><stop offset="1" stop-color="#2f4f8f"/></linearGradient><linearGradient id="ice" x1="0" y1="0" x2="0" y2="1"><stop offset="0" stop-color="#f4f0fa"/><stop offset="1" stop-color="#9e98d0"/></linearGradient></defs>
<circle cx="22" cy="14" r="5" fill="#f7d770" opacity="0.9"/>
<path d="M18 23L32 15L38 11L44 9L50 10L56 8L62 11L70 12L76 13V23Q50 22 18 23Z" fill="url(#mtn)"/>
<path d="M14 34Q20 26 28 22Q50 22 76 23V40H10Z" fill="#dcdaf0" opacity="0.8"/>
<path d="M24 33L34 24L40 17L46 24L56 27L60 34Q42 38 24 33Z" fill="url(#ice)"/>
<path d="M0 40Q8 36 14 40Z" fill="#e9dcef"/>
</svg>
<svg class="s" style="left:407px;top:739px;" width="18" height="18" viewBox="0 0 18 18"><circle cx="9" cy="9" r="7.5" fill="none" stroke="#fff" stroke-width="2"/></svg>
<svg class="s" style="left:456px;top:740px;" width="17" height="16" viewBox="0 0 17 16"><rect x="3" y="3.5" width="10" height="9" fill="none" stroke="#fff" stroke-width="1.3"/><path d="M0 0.8H13M0 15.2H13M15.5 3V5M15.5 7V9M15.5 11V13" stroke="#fff" stroke-width="1.3"/></svg>
<svg class="s" style="left:506px;top:737px;" width="17" height="22" viewBox="0 0 17 22"><rect x="0" y="0" width="17" height="22" rx="1" fill="#7d8894"/><rect x="2" y="2" width="13" height="5" fill="#b7d8f4"/><g fill="#e8e8e8"><rect x="2" y="9" width="3" height="2.5"/><rect x="7" y="9" width="3" height="2.5"/><rect x="12" y="9" width="3" height="2.5"/><rect x="2" y="13" width="3" height="2.5"/><rect x="7" y="13" width="3" height="2.5"/><rect x="12" y="13" width="3" height="2.5"/><rect x="2" y="17" width="3" height="2.5"/><rect x="7" y="17" width="3" height="2.5"/><rect x="12" y="17" width="3" height="6" fill="#4c8fd0"/></g></svg>
<svg class="s" style="left:552px;top:737px;" width="22" height="20" viewBox="0 0 22 20"><rect x="8" y="3" width="14" height="13" fill="#fff"/><path d="M9 5L15 10L21 5" fill="none" stroke="#0f6cbd" stroke-width="1.4"/><path d="M0 2L12 0V20L0 18Z" fill="#0f6cbd"/><ellipse cx="6" cy="10" rx="3.3" ry="4" fill="none" stroke="#fff" stroke-width="1.8"/></svg>
<svg class="s" style="left:601px;top:737px;" width="23" height="21" viewBox="0 0 23 21"><ellipse cx="10" cy="12" rx="10" ry="8.5" fill="#e8e1d5"/><circle cx="5" cy="10" r="2" fill="#e23b3b"/><circle cx="9" cy="6.5" r="2" fill="#f0c040"/><circle cx="5.5" cy="15" r="2" fill="#3b8be2"/><circle cx="10" cy="17" r="1.8" fill="#3bb25a"/><path d="M12 15L22 1" stroke="#c78a3a" stroke-width="2.5"/><path d="M10.5 17L13 13.5" stroke="#555" stroke-width="3"/></svg>
<svg class="s" style="left:651px;top:738px;" width="22" height="19" viewBox="0 0 22 19"><path d="M0 2H8L10 4H22V19H0Z" fill="#e8a92a"/><path d="M0 6H22V19H0Z" fill="#ffd35c"/><rect x="5" y="11" width="12" height="3" fill="#2d7dd2"/><rect x="7" y="14" width="8" height="5" fill="#1e5ea8"/></svg>
<svg class="s" style="left:700px;top:737px;" width="21" height="21" viewBox="0 0 21 21"><path d="M4 2L18 0L21 17L7 20Z" fill="#cfe3ea"/><path d="M1 4L15 2L18 19L4 21Z" fill="#a9cbd6"/><path d="M4 8L14 6.5M4.5 11L14.5 9.5M5 14L15 12.5" stroke="#6a98a8"/></svg>
<svg class="s" style="left:747px;top:737px;" width="24" height="21" viewBox="0 0 24 21"><path d="M6 0L24 3V15L6 13Z" fill="#60b2ee"/><path d="M0 15L12 13L20 17L8 20Z" fill="#d9e6f0"/><path d="M8 13V17" stroke="#888"/></svg>
<svg class="s" style="left:798px;top:737px;" width="22" height="22" viewBox="0 0 22 22"><circle cx="11" cy="11" r="11" fill="#db4437"/><path d="M11 11L1.5 5.5A11 11 0 0 0 11 22Z" fill="#0f9d58"/><path d="M11 11L11 22A11 11 0 0 0 20.5 5.5Z" fill="#f4c20d"/><path d="M11 11L20.5 5.5H11Z" fill="#f4c20d"/><circle cx="11" cy="11" r="5" fill="#fff"/><circle cx="11" cy="11" r="3.8" fill="#4285f4"/></svg>
<svg class="s" style="left:846px;top:739px;" width="23" height="18" viewBox="0 0 23 18"><rect x="0" y="0" width="23" height="18" fill="#7fbde8"/><rect x="2" y="3" width="8" height="8" fill="#fff"/><circle cx="6" cy="6" r="2" fill="#2d7dd2"/><path d="M12 4H21M12 7H21M12 10H21M2 13H21" stroke="#fff" stroke-width="1.3"/></svg>
<svg class="s" style="left:896px;top:737px;" width="22" height="21" viewBox="0 0 22 21"><rect x="8" y="2" width="14" height="17" fill="#fff"/><path d="M10 5H20M10 8H20M10 11H20M10 14H20M15 2V19" stroke="#1e7145"/><path d="M0 2.5L12 0V21L0 18.5Z" fill="#1e7145"/><text x="2" y="15" font-size="11" font-family="Liberation Sans" font-weight="bold" fill="#fff">x</text></svg>
<div class="r" style="left:544px;top:766px;width:40px;height:2px;background:#8fb4d8;"></div>
<div class="r" style="left:642px;top:766px;width:40px;height:2px;background:#8fb4d8;"></div>
<div class="r" style="left:789px;top:766px;width:40px;height:2px;background:#8fb4d8;"></div>
<div class="r" style="left:838px;top:766px;width:40px;height:2px;background:#8fb4d8;"></div>
<div class="r" style="left:887px;top:766px;width:40px;height:2px;background:#8fb4d8;"></div>
<svg class="s" style="left:1058px;top:738px;" width="21" height="19" viewBox="0 0 21 19"><path d="M3 17Q0 8 8 3Q14 0 21 0Q20 10 14 15Q9 19 3 17Z" fill="#8cc63f"/><path d="M3 17Q8 9 15 5" stroke="#dff0c0" stroke-width="1" fill="none"/><path d="M3 17L2 19" stroke="#8cc63f" stroke-width="1.5"/></svg>
<div class="t" style="left:1089.00px;top:741.57px;font-size:13.5px;line-height:13.5px;color:#fff;transform:scaleX(0.9046);transform-origin:0 0;">Desc...</div>
<svg class="s" style="left:1153px;top:743px;" width="12" height="7" viewBox="0 0 12 7"><path d="M0.8 6.5L6 1.2L11.2 6.5" fill="none" stroke="#fff" stroke-width="1.4"/></svg>
<svg class="s" style="left:1175px;top:741px;" width="17" height="12" viewBox="0 0 17 12"><rect x="4.5" y="3.5" width="11" height="7" fill="none" stroke="#fff"/><rect x="6" y="5" width="8" height="4" fill="#fff"/><path d="M16 5.5V8.5M0 6H4.5M2 1V6" stroke="#fff"/></svg>
<svg class="s" style="left:1202px;top:740px;" width="13" height="14" viewBox="0 0 13 14"><path d="M1 13A12 12 0 0 1 13 1M3.5 13A9.5 9.5 0 0 1 13 3.5M6 13A7 7 0 0 1 13 6M8.5 13A4.5 4.5 0 0 1 13 8.5" fill="none" stroke="#fff" stroke-width="1"/><circle cx="12" cy="12" r="1.5" fill="#fff"/></svg>
<svg class="s" style="left:1222px;top:740px;" width="17" height="15" viewBox="0 0 17 15"><path d="M1 5H4L8.5 1V14L4 10H1Z" fill="none" stroke="#fff" stroke-width="1.1"/><path d="M11 4.5Q13 7.5 11 10.5M13.5 2.5Q17 7.5 13.5 12.5" fill="none" stroke="#fff" stroke-width="1.1"/></svg>
<div class="t" style="left:1264.00px;top:732.07px;font-size:13.5px;line-height:13.5px;color:#fff;transform:scaleX(0.7992);transform-origin:0 0;">20:18</div>
<div class="t" style="left:1249.00px;top:749.57px;font-size:13.5px;line-height:13.5px;color:#fff;transform:scaleX(0.8584);transform-origin:0 0;">01/12/2022</div>
<svg class="s" style="left:1325px;top:739px;" width="26" height="25" viewBox="0 0 26 25"><path d="M0.5 1.5H17.5V13.5H8L4 17V13.5H0.5Z" fill="#fff"/><path d="M3.5 5H14.5M3.5 8H14.5M3.5 11H11" stroke="#1e2d3d" stroke-width="1.1"/><circle cx="18" cy="16.5" r="7.5" fill="#3a3a3a" stroke="#1e2d3d" stroke-width="1"/><text x="14.5" y="21" font-size="12" font-weight="bold" font-family="Liberation Sans" fill="#fff">7</text></svg>
</body></html>
